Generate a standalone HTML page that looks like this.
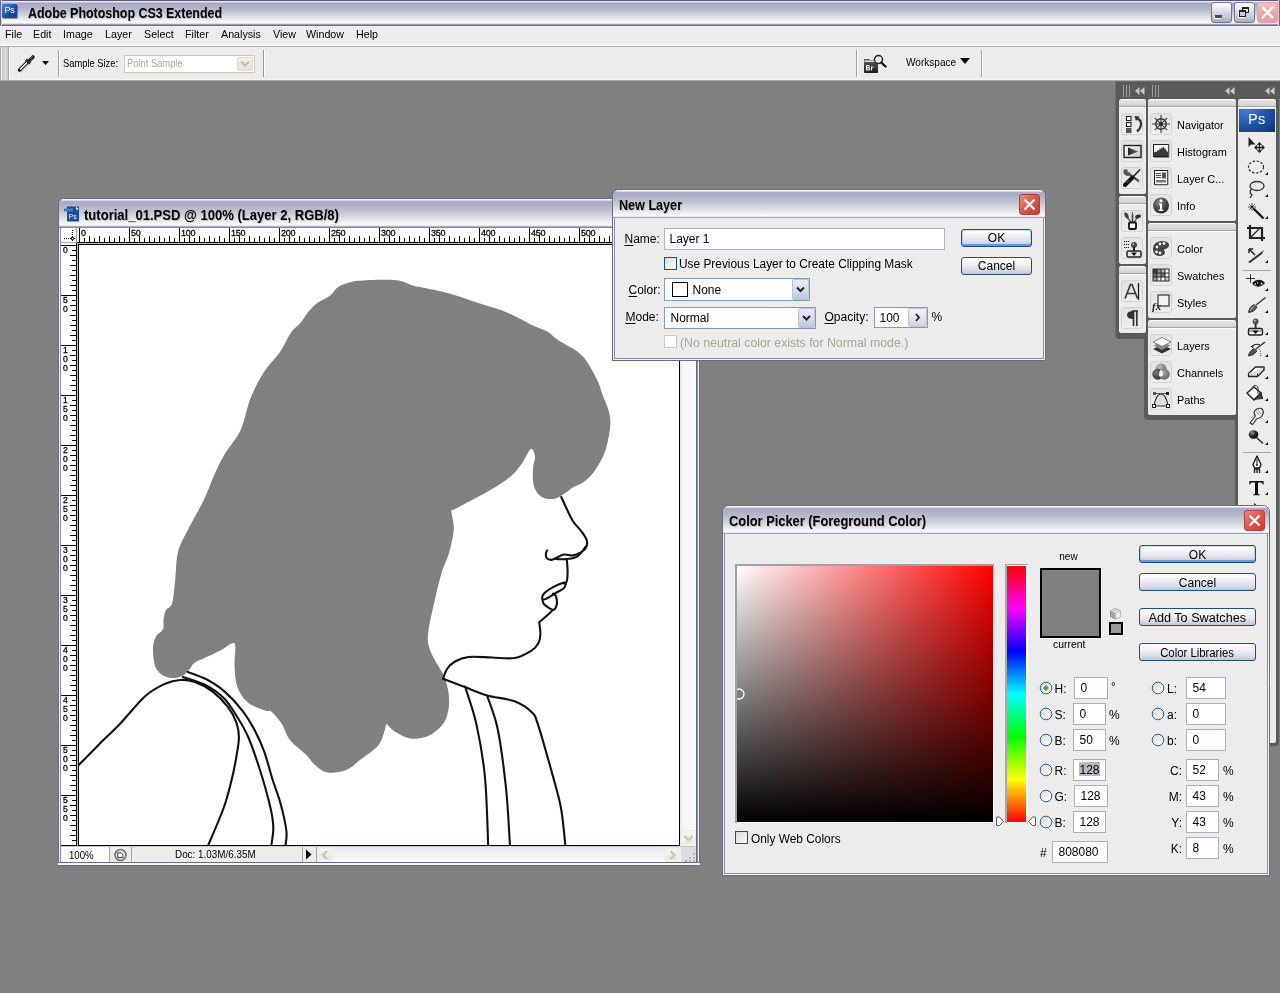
<!DOCTYPE html><html><head><meta charset="utf-8"><style>
html,body{margin:0;padding:0;}
body{width:1280px;height:993px;overflow:hidden;background:#808080;position:relative;font-family:"Liberation Sans", sans-serif;}
div{box-sizing:border-box;}
</style></head><body>
<div id="root" style="position:absolute;left:0;top:0;width:1280px;height:993px;will-change:transform">
<div style="position:absolute;left:0px;top:0px;width:1280px;height:26px;background:linear-gradient(to bottom,#5b5b7b 0px,#5b5b7b 1px,#f2f2f8 1px,#e0e0ec 2px,#a9a9c6 3px,#aaaac6 5px,#b9bccd 10px,#d2d4de 15px,#eeeef2 20px,#fbfbfb 22px,#f2f2f4 23px,#d0d0dc 24px,#6a6a88 25px,#6a6a88 26px)"></div>
<div style="position:absolute;left:0px;top:0px;width:2px;height:26px;background:linear-gradient(to right,#6a6a88 1px,#d0d0e0 1px)"></div>
<div style="position:absolute;left:1278px;top:0px;width:2px;height:26px;background:linear-gradient(to right,#d0d0e0 1px,#6a6a88 1px)"></div>
<div style="position:absolute;left:2px;top:4px;width:15px;height:14px;background:linear-gradient(135deg,#4a86d8,#1c4a9c 60%,#173f86);border-radius:1px;box-shadow:1px 1px 0 rgba(0,0,30,0.35)"></div>
<div style="position:absolute;left:4.5px;top:5.74px;font-size:9px;line-height:9px;color:#fff;font-weight:400;white-space:nowrap;letter-spacing:-0.2px">Ps</div>
<div style="position:absolute;left:28px;top:5.60px;font-size:14.5px;line-height:14.5px;color:#000;font-weight:700;white-space:nowrap;transform:scaleX(0.857);transform-origin:0 0;text-shadow:1px 1px 0 rgba(120,120,150,0.35)">Adobe Photoshop CS3 Extended</div>
<div style="position:absolute;left:1211px;top:2px;width:21px;height:21px;border:1px solid #6e7898;border-radius:3px;background:linear-gradient(to bottom,#ffffff,#e8e8f0 30%,#c0c0d4 80%,#a8a8c0)"></div>
<div style="position:absolute;left:1234px;top:2px;width:21px;height:21px;border:1px solid #6e7898;border-radius:3px;background:linear-gradient(to bottom,#ffffff,#e8e8f0 30%,#c0c0d4 80%,#a8a8c0)"></div>
<div style="position:absolute;left:1257px;top:2px;width:21px;height:21px;border:1px solid #e8a0a0;border-radius:3px;background:linear-gradient(to bottom,#f4c4c0,#e8a8a4 50%,#e4a0a0)"></div>
<div style="position:absolute;left:1215px;top:15px;width:7px;height:3px;background:#4a4a6a;box-shadow:-1px 1px 0 #fff"></div>
<div style="position:absolute;left:1242px;top:7px;width:7px;height:6px;border:1px solid #222;border-top-width:2px;"></div>
<div style="position:absolute;left:1239px;top:10px;width:7px;height:7px;border:1px solid #222;border-top-width:2px;background:#c8c8dc;box-shadow:-1px 1px 0 #fff"></div>
<svg style="position:absolute;left:1257px;top:2px" width="21" height="21"><path d="M5 5 L16 16 M16 5 L5 16" stroke="#fff" stroke-width="2.2"/></svg>
<div style="position:absolute;left:0px;top:26px;width:1280px;height:20px;background:linear-gradient(to bottom,#f4f4f0 0,#f4f4f0 1px,#ececec 1px,#ececec 18px,#fbfbfb 19px)"></div>
<div style="position:absolute;left:5px;top:29.15px;font-size:11.5px;line-height:11.5px;color:#000;font-weight:400;white-space:nowrap;transform:scaleX(0.93);transform-origin:0 0;">File</div>
<div style="position:absolute;left:33px;top:29.15px;font-size:11.5px;line-height:11.5px;color:#000;font-weight:400;white-space:nowrap;transform:scaleX(0.93);transform-origin:0 0;">Edit</div>
<div style="position:absolute;left:63px;top:29.15px;font-size:11.5px;line-height:11.5px;color:#000;font-weight:400;white-space:nowrap;transform:scaleX(0.93);transform-origin:0 0;">Image</div>
<div style="position:absolute;left:105px;top:29.15px;font-size:11.5px;line-height:11.5px;color:#000;font-weight:400;white-space:nowrap;transform:scaleX(0.93);transform-origin:0 0;">Layer</div>
<div style="position:absolute;left:144px;top:29.15px;font-size:11.5px;line-height:11.5px;color:#000;font-weight:400;white-space:nowrap;transform:scaleX(0.93);transform-origin:0 0;">Select</div>
<div style="position:absolute;left:185px;top:29.15px;font-size:11.5px;line-height:11.5px;color:#000;font-weight:400;white-space:nowrap;transform:scaleX(0.93);transform-origin:0 0;">Filter</div>
<div style="position:absolute;left:221px;top:29.15px;font-size:11.5px;line-height:11.5px;color:#000;font-weight:400;white-space:nowrap;transform:scaleX(0.93);transform-origin:0 0;">Analysis</div>
<div style="position:absolute;left:273px;top:29.15px;font-size:11.5px;line-height:11.5px;color:#000;font-weight:400;white-space:nowrap;transform:scaleX(0.93);transform-origin:0 0;">View</div>
<div style="position:absolute;left:306px;top:29.15px;font-size:11.5px;line-height:11.5px;color:#000;font-weight:400;white-space:nowrap;transform:scaleX(0.93);transform-origin:0 0;">Window</div>
<div style="position:absolute;left:356px;top:29.15px;font-size:11.5px;line-height:11.5px;color:#000;font-weight:400;white-space:nowrap;transform:scaleX(0.93);transform-origin:0 0;">Help</div>
<div style="position:absolute;left:0px;top:46px;width:1280px;height:35px;background:linear-gradient(to bottom,#b0b0b0 0,#b0b0b0 1px,#ececec 1px,#ececec 33px,#f6f6f6 33px,#f6f6f6 34px,#a8a8a8 34px)"></div>
<div style="position:absolute;left:0px;top:47px;width:10px;height:33px;background:linear-gradient(to right,#a8a8a8 0,#a8a8a8 1px,#f0f0f0 1px,#f0f0f0 2px,#c6c6c6 2px,#dadada 5px,#c8c8c8 8px,#a6a6a6 8px,#a6a6a6 9px,#fafafa 9px)"></div>
<svg style="position:absolute;left:17px;top:53px" width="20" height="20" viewBox="0 0 20 20">
<path d="M2.8 17.2 L11 9" stroke="#aaa" stroke-width="3.4" stroke-linecap="round" transform="translate(0.8,0.8)" opacity="0.35"/>
<path d="M2.5 17 L10.5 9" stroke="#111" stroke-width="3.4" stroke-linecap="round"/>
<path d="M3 16.5 L10 9.5" stroke="#fff" stroke-width="1.6"/>
<path d="M9 6.5 L13 10.5" stroke="#333" stroke-width="3"/>
<path d="M12 8 L16 4" stroke="#2a2a2a" stroke-width="3.6" stroke-linecap="round"/>
<path d="M13.5 5.5 L15.5 3.5" stroke="#777" stroke-width="1"/>
</svg>
<svg style="position:absolute;left:42px;top:61px" width="8" height="5"><path d="M0 0 H7 L3.5 4 Z" fill="#000"/></svg>
<div style="position:absolute;left:58px;top:50px;width:2px;height:27px;background:linear-gradient(to right,#a0a0a8 1px,#fff 1px)"></div>
<div style="position:absolute;left:63px;top:57.71px;font-size:11px;line-height:11px;color:#000;font-weight:400;white-space:nowrap;transform:scaleX(0.85);transform-origin:0 0;">Sample Size:</div>
<div style="position:absolute;left:124px;top:55px;width:131px;height:18px;border:1px solid #c9c9b9;background:#fff"></div>
<div style="position:absolute;left:126px;top:57px;width:111px;height:14px;background:#fff"></div>
<div style="position:absolute;left:127px;top:58.21px;font-size:11px;line-height:11px;color:#a8a898;font-weight:400;white-space:nowrap;transform:scaleX(0.85);transform-origin:0 0;">Point Sample</div>
<div style="position:absolute;left:237px;top:57px;width:16px;height:14px;background:linear-gradient(#f2f2ea,#e4e4d8);border:1px solid #d8d8cc;border-radius:2px"></div>
<svg style="position:absolute;left:240px;top:60px" width="10" height="8"><path d="M1 1.5 L5 5.5 L9 1.5" stroke="#c0c0b0" stroke-width="2" fill="none"/></svg>
<div style="position:absolute;left:263px;top:50px;width:2px;height:27px;background:linear-gradient(to right,#9898a4 1px,#fff 1px)"></div>
<div style="position:absolute;left:856px;top:50px;width:2px;height:27px;background:linear-gradient(to right,#a0a0a8 1px,#fff 1px)"></div>
<svg style="position:absolute;left:863px;top:54px;filter:grayscale(1)" width="25" height="20" viewBox="0 0 25 20">
<defs><linearGradient id="brg" x1="0" y1="0" x2="0" y2="1"><stop offset="0" stop-color="#666"/><stop offset="1" stop-color="#1a1a1a"/></linearGradient></defs>
<path d="M1 5 H6 L7 6 H15 V18 Q15 19 14 19 H2 Q1 19 1 18 Z" fill="url(#brg)"/>
<path d="M1.5 6.5 H14.5 V8 H1.5 Z" fill="#ddd"/>
<path d="M3 16.5 V11 H5.2 Q6.8 11 6.8 12.4 Q6.8 13.4 5.8 13.6 Q7.1 13.8 7.1 15 Q7.1 16.5 5.4 16.5 Z M4.2 12 V13.2 H5.1 Q5.7 13.2 5.7 12.6 Q5.7 12 5.1 12 Z M4.2 14.2 V15.5 H5.3 Q6 15.5 6 14.85 Q6 14.2 5.3 14.2 Z M8 16.5 V12.6 H9 V13.4 Q9.4 12.5 10.4 12.5 V13.6 Q9 13.6 9 14.8 V16.5 Z" fill="#fff"/>
<circle cx="15.5" cy="5.5" r="4" fill="#f0f0f0" stroke="#222" stroke-width="1.4"/>
<path d="M18.3 8.5 L22.5 12.5" stroke="#111" stroke-width="2.4" stroke-linecap="round"/>
</svg>
<div style="position:absolute;left:906px;top:57.21px;font-size:11px;line-height:11px;color:#000;font-weight:400;white-space:nowrap;transform:scaleX(0.915);transform-origin:0 0;">Workspace</div>
<svg style="position:absolute;left:960px;top:58px" width="11" height="7"><path d="M0 0 H10 L5 6 Z" fill="#000"/></svg>
<div style="position:absolute;left:981px;top:50px;width:2px;height:27px;background:linear-gradient(to right,#a0a0a8 1px,#fff 1px)"></div>
<div style="position:absolute;left:58px;top:198px;width:642px;height:668px;background:#8c8ca8;border:1px solid #6a6a8a;border-radius:6px 6px 0 0"></div>
<div style="position:absolute;left:59px;top:199px;width:640px;height:666px;border:1px solid #f4f4f8;border-radius:5px 5px 0 0;background:transparent"></div>
<div style="position:absolute;left:59px;top:199px;width:640px;height:29px;border-radius:5px 5px 0 0;background:linear-gradient(to bottom,#f8f8fc 0,#f8f8fc 1px,#b0b0cc 2px,#a9a9c6 4px,#bcbfce 11px,#d8dae2 18px,#f4f4f6 24px,#fbfbfb 26px,#d8d8e0 27px,#8a8aa8 28px,#7a7a98 29px)"></div>
<svg style="position:absolute;left:63px;top:205px" width="18" height="18" viewBox="0 0 18 18">
<rect x="4" y="1.5" width="12" height="15" fill="#1e4c9c"/>
<rect x="1" y="3.5" width="9" height="3" fill="#3a78d4"/>
<path d="M13 1.5 L16 4.5 L13 4.5 Z" fill="#fff"/>
<text x="5.5" y="14" font-size="7" fill="#fff" font-family="Liberation Sans">Ps</text>
</svg>
<div style="position:absolute;left:84px;top:207.95px;font-size:14px;line-height:14px;color:#000;font-weight:700;white-space:nowrap;transform:scaleX(0.932);transform-origin:0 0;text-shadow:1px 1px 0 rgba(120,120,150,0.3)">tutorial_01.PSD @ 100% (Layer 2, RGB/8)</div>
<div style="position:absolute;left:61px;top:228px;width:635px;height:15px;background:#fff"></div>
<div style="position:absolute;left:61px;top:243px;width:16px;height:603px;background:#fff"></div>
<div style="position:absolute;left:61px;top:228px;width:16px;height:15px;background:#fff;border-right:1px solid #a8a8a8;border-bottom:1px solid #a8a8a8"></div>
<svg style="position:absolute;left:61px;top:228px" width="16" height="15"><path d="M3 10.5 H14" stroke="#000" stroke-width="1" stroke-dasharray="1 1"/><path d="M11.5 2 V14" stroke="#000" stroke-width="1" stroke-dasharray="1 1"/><rect x="10.5" y="9.5" width="2" height="2" fill="#fff" stroke="#000" stroke-width="0.8"/></svg>
<svg style="position:absolute;left:0;top:0" width="1280" height="993"><path d="M79.5 228 V242 M84.5 238 V242 M89.5 236 V242 M94.5 238 V242 M99.5 236 V242 M104.5 238 V242 M109.5 236 V242 M114.5 238 V242 M119.5 236 V242 M124.5 238 V242 M129.5 228 V242 M134.5 238 V242 M139.5 236 V242 M144.5 238 V242 M149.5 236 V242 M154.5 238 V242 M159.5 236 V242 M164.5 238 V242 M169.5 236 V242 M174.5 238 V242 M179.5 228 V242 M184.5 238 V242 M189.5 236 V242 M194.5 238 V242 M199.5 236 V242 M204.5 238 V242 M209.5 236 V242 M214.5 238 V242 M219.5 236 V242 M224.5 238 V242 M229.5 228 V242 M234.5 238 V242 M239.5 236 V242 M244.5 238 V242 M249.5 236 V242 M254.5 238 V242 M259.5 236 V242 M264.5 238 V242 M269.5 236 V242 M274.5 238 V242 M279.5 228 V242 M284.5 238 V242 M289.5 236 V242 M294.5 238 V242 M299.5 236 V242 M304.5 238 V242 M309.5 236 V242 M314.5 238 V242 M319.5 236 V242 M324.5 238 V242 M329.5 228 V242 M334.5 238 V242 M339.5 236 V242 M344.5 238 V242 M349.5 236 V242 M354.5 238 V242 M359.5 236 V242 M364.5 238 V242 M369.5 236 V242 M374.5 238 V242 M379.5 228 V242 M384.5 238 V242 M389.5 236 V242 M394.5 238 V242 M399.5 236 V242 M404.5 238 V242 M409.5 236 V242 M414.5 238 V242 M419.5 236 V242 M424.5 238 V242 M429.5 228 V242 M434.5 238 V242 M439.5 236 V242 M444.5 238 V242 M449.5 236 V242 M454.5 238 V242 M459.5 236 V242 M464.5 238 V242 M469.5 236 V242 M474.5 238 V242 M479.5 228 V242 M484.5 238 V242 M489.5 236 V242 M494.5 238 V242 M499.5 236 V242 M504.5 238 V242 M509.5 236 V242 M514.5 238 V242 M519.5 236 V242 M524.5 238 V242 M529.5 228 V242 M534.5 238 V242 M539.5 236 V242 M544.5 238 V242 M549.5 236 V242 M554.5 238 V242 M559.5 236 V242 M564.5 238 V242 M569.5 236 V242 M574.5 238 V242 M579.5 228 V242 M584.5 238 V242 M589.5 236 V242 M594.5 238 V242 M599.5 236 V242 M604.5 238 V242 M609.5 236 V242 M614.5 238 V242 M619.5 236 V242 M624.5 238 V242 M629.5 228 V242 M634.5 238 V242 M639.5 236 V242 M644.5 238 V242 M649.5 236 V242 M654.5 238 V242 M659.5 236 V242 M664.5 238 V242 M669.5 236 V242 M674.5 238 V242 M679.5 228 V242 M684.5 238 V242 M689.5 236 V242 M694.5 238 V242 M699.5 236 V242 M77 242.5 H699" stroke="#000" stroke-width="1" fill="none"/></svg>
<div style="position:absolute;left:81px;top:228.38px;font-size:9.5px;line-height:9.5px;color:#000;font-weight:400;white-space:nowrap;transform:scaleX(0.95);transform-origin:0 0;letter-spacing:-0.3px;-webkit-text-stroke:0.3px #000">0</div>
<div style="position:absolute;left:131px;top:228.38px;font-size:9.5px;line-height:9.5px;color:#000;font-weight:400;white-space:nowrap;transform:scaleX(0.95);transform-origin:0 0;letter-spacing:-0.3px;-webkit-text-stroke:0.3px #000">50</div>
<div style="position:absolute;left:181px;top:228.38px;font-size:9.5px;line-height:9.5px;color:#000;font-weight:400;white-space:nowrap;transform:scaleX(0.95);transform-origin:0 0;letter-spacing:-0.3px;-webkit-text-stroke:0.3px #000">100</div>
<div style="position:absolute;left:231px;top:228.38px;font-size:9.5px;line-height:9.5px;color:#000;font-weight:400;white-space:nowrap;transform:scaleX(0.95);transform-origin:0 0;letter-spacing:-0.3px;-webkit-text-stroke:0.3px #000">150</div>
<div style="position:absolute;left:281px;top:228.38px;font-size:9.5px;line-height:9.5px;color:#000;font-weight:400;white-space:nowrap;transform:scaleX(0.95);transform-origin:0 0;letter-spacing:-0.3px;-webkit-text-stroke:0.3px #000">200</div>
<div style="position:absolute;left:331px;top:228.38px;font-size:9.5px;line-height:9.5px;color:#000;font-weight:400;white-space:nowrap;transform:scaleX(0.95);transform-origin:0 0;letter-spacing:-0.3px;-webkit-text-stroke:0.3px #000">250</div>
<div style="position:absolute;left:381px;top:228.38px;font-size:9.5px;line-height:9.5px;color:#000;font-weight:400;white-space:nowrap;transform:scaleX(0.95);transform-origin:0 0;letter-spacing:-0.3px;-webkit-text-stroke:0.3px #000">300</div>
<div style="position:absolute;left:431px;top:228.38px;font-size:9.5px;line-height:9.5px;color:#000;font-weight:400;white-space:nowrap;transform:scaleX(0.95);transform-origin:0 0;letter-spacing:-0.3px;-webkit-text-stroke:0.3px #000">350</div>
<div style="position:absolute;left:481px;top:228.38px;font-size:9.5px;line-height:9.5px;color:#000;font-weight:400;white-space:nowrap;transform:scaleX(0.95);transform-origin:0 0;letter-spacing:-0.3px;-webkit-text-stroke:0.3px #000">400</div>
<div style="position:absolute;left:531px;top:228.38px;font-size:9.5px;line-height:9.5px;color:#000;font-weight:400;white-space:nowrap;transform:scaleX(0.95);transform-origin:0 0;letter-spacing:-0.3px;-webkit-text-stroke:0.3px #000">450</div>
<div style="position:absolute;left:581px;top:228.38px;font-size:9.5px;line-height:9.5px;color:#000;font-weight:400;white-space:nowrap;transform:scaleX(0.95);transform-origin:0 0;letter-spacing:-0.3px;-webkit-text-stroke:0.3px #000">500</div>
<svg style="position:absolute;left:0;top:0" width="1280" height="993"><path d="M61 245.5 H77 M72 250.5 H77 M70 255.5 H77 M72 260.5 H77 M70 265.5 H77 M72 270.5 H77 M70 275.5 H77 M72 280.5 H77 M70 285.5 H77 M72 290.5 H77 M61 295.5 H77 M72 300.5 H77 M70 305.5 H77 M72 310.5 H77 M70 315.5 H77 M72 320.5 H77 M70 325.5 H77 M72 330.5 H77 M70 335.5 H77 M72 340.5 H77 M61 345.5 H77 M72 350.5 H77 M70 355.5 H77 M72 360.5 H77 M70 365.5 H77 M72 370.5 H77 M70 375.5 H77 M72 380.5 H77 M70 385.5 H77 M72 390.5 H77 M61 395.5 H77 M72 400.5 H77 M70 405.5 H77 M72 410.5 H77 M70 415.5 H77 M72 420.5 H77 M70 425.5 H77 M72 430.5 H77 M70 435.5 H77 M72 440.5 H77 M61 445.5 H77 M72 450.5 H77 M70 455.5 H77 M72 460.5 H77 M70 465.5 H77 M72 470.5 H77 M70 475.5 H77 M72 480.5 H77 M70 485.5 H77 M72 490.5 H77 M61 495.5 H77 M72 500.5 H77 M70 505.5 H77 M72 510.5 H77 M70 515.5 H77 M72 520.5 H77 M70 525.5 H77 M72 530.5 H77 M70 535.5 H77 M72 540.5 H77 M61 545.5 H77 M72 550.5 H77 M70 555.5 H77 M72 560.5 H77 M70 565.5 H77 M72 570.5 H77 M70 575.5 H77 M72 580.5 H77 M70 585.5 H77 M72 590.5 H77 M61 595.5 H77 M72 600.5 H77 M70 605.5 H77 M72 610.5 H77 M70 615.5 H77 M72 620.5 H77 M70 625.5 H77 M72 630.5 H77 M70 635.5 H77 M72 640.5 H77 M61 645.5 H77 M72 650.5 H77 M70 655.5 H77 M72 660.5 H77 M70 665.5 H77 M72 670.5 H77 M70 675.5 H77 M72 680.5 H77 M70 685.5 H77 M72 690.5 H77 M61 695.5 H77 M72 700.5 H77 M70 705.5 H77 M72 710.5 H77 M70 715.5 H77 M72 720.5 H77 M70 725.5 H77 M72 730.5 H77 M70 735.5 H77 M72 740.5 H77 M61 745.5 H77 M72 750.5 H77 M70 755.5 H77 M72 760.5 H77 M70 765.5 H77 M72 770.5 H77 M70 775.5 H77 M72 780.5 H77 M70 785.5 H77 M72 790.5 H77 M61 795.5 H77 M72 800.5 H77 M70 805.5 H77 M72 810.5 H77 M70 815.5 H77 M72 820.5 H77 M70 825.5 H77 M72 830.5 H77 M70 835.5 H77 M72 840.5 H77 M61 845.5 H77 M76.5 243 V846" stroke="#000" stroke-width="1" fill="none"/></svg>
<div style="position:absolute;left:63px;top:245.94px;font-size:9px;line-height:9px;color:#000;font-weight:400;white-space:nowrap;transform:scaleX(0.95);transform-origin:0 0;-webkit-text-stroke:0.3px #000">0</div>
<div style="position:absolute;left:63px;top:295.94px;font-size:9px;line-height:9px;color:#000;font-weight:400;white-space:nowrap;transform:scaleX(0.95);transform-origin:0 0;-webkit-text-stroke:0.3px #000">5</div>
<div style="position:absolute;left:63px;top:304.94px;font-size:9px;line-height:9px;color:#000;font-weight:400;white-space:nowrap;transform:scaleX(0.95);transform-origin:0 0;-webkit-text-stroke:0.3px #000">0</div>
<div style="position:absolute;left:63px;top:345.94px;font-size:9px;line-height:9px;color:#000;font-weight:400;white-space:nowrap;transform:scaleX(0.95);transform-origin:0 0;-webkit-text-stroke:0.3px #000">1</div>
<div style="position:absolute;left:63px;top:354.94px;font-size:9px;line-height:9px;color:#000;font-weight:400;white-space:nowrap;transform:scaleX(0.95);transform-origin:0 0;-webkit-text-stroke:0.3px #000">0</div>
<div style="position:absolute;left:63px;top:363.94px;font-size:9px;line-height:9px;color:#000;font-weight:400;white-space:nowrap;transform:scaleX(0.95);transform-origin:0 0;-webkit-text-stroke:0.3px #000">0</div>
<div style="position:absolute;left:63px;top:395.94px;font-size:9px;line-height:9px;color:#000;font-weight:400;white-space:nowrap;transform:scaleX(0.95);transform-origin:0 0;-webkit-text-stroke:0.3px #000">1</div>
<div style="position:absolute;left:63px;top:404.94px;font-size:9px;line-height:9px;color:#000;font-weight:400;white-space:nowrap;transform:scaleX(0.95);transform-origin:0 0;-webkit-text-stroke:0.3px #000">5</div>
<div style="position:absolute;left:63px;top:413.94px;font-size:9px;line-height:9px;color:#000;font-weight:400;white-space:nowrap;transform:scaleX(0.95);transform-origin:0 0;-webkit-text-stroke:0.3px #000">0</div>
<div style="position:absolute;left:63px;top:445.94px;font-size:9px;line-height:9px;color:#000;font-weight:400;white-space:nowrap;transform:scaleX(0.95);transform-origin:0 0;-webkit-text-stroke:0.3px #000">2</div>
<div style="position:absolute;left:63px;top:454.94px;font-size:9px;line-height:9px;color:#000;font-weight:400;white-space:nowrap;transform:scaleX(0.95);transform-origin:0 0;-webkit-text-stroke:0.3px #000">0</div>
<div style="position:absolute;left:63px;top:463.94px;font-size:9px;line-height:9px;color:#000;font-weight:400;white-space:nowrap;transform:scaleX(0.95);transform-origin:0 0;-webkit-text-stroke:0.3px #000">0</div>
<div style="position:absolute;left:63px;top:495.94px;font-size:9px;line-height:9px;color:#000;font-weight:400;white-space:nowrap;transform:scaleX(0.95);transform-origin:0 0;-webkit-text-stroke:0.3px #000">2</div>
<div style="position:absolute;left:63px;top:504.94px;font-size:9px;line-height:9px;color:#000;font-weight:400;white-space:nowrap;transform:scaleX(0.95);transform-origin:0 0;-webkit-text-stroke:0.3px #000">5</div>
<div style="position:absolute;left:63px;top:513.94px;font-size:9px;line-height:9px;color:#000;font-weight:400;white-space:nowrap;transform:scaleX(0.95);transform-origin:0 0;-webkit-text-stroke:0.3px #000">0</div>
<div style="position:absolute;left:63px;top:545.94px;font-size:9px;line-height:9px;color:#000;font-weight:400;white-space:nowrap;transform:scaleX(0.95);transform-origin:0 0;-webkit-text-stroke:0.3px #000">3</div>
<div style="position:absolute;left:63px;top:554.94px;font-size:9px;line-height:9px;color:#000;font-weight:400;white-space:nowrap;transform:scaleX(0.95);transform-origin:0 0;-webkit-text-stroke:0.3px #000">0</div>
<div style="position:absolute;left:63px;top:563.94px;font-size:9px;line-height:9px;color:#000;font-weight:400;white-space:nowrap;transform:scaleX(0.95);transform-origin:0 0;-webkit-text-stroke:0.3px #000">0</div>
<div style="position:absolute;left:63px;top:595.94px;font-size:9px;line-height:9px;color:#000;font-weight:400;white-space:nowrap;transform:scaleX(0.95);transform-origin:0 0;-webkit-text-stroke:0.3px #000">3</div>
<div style="position:absolute;left:63px;top:604.94px;font-size:9px;line-height:9px;color:#000;font-weight:400;white-space:nowrap;transform:scaleX(0.95);transform-origin:0 0;-webkit-text-stroke:0.3px #000">5</div>
<div style="position:absolute;left:63px;top:613.94px;font-size:9px;line-height:9px;color:#000;font-weight:400;white-space:nowrap;transform:scaleX(0.95);transform-origin:0 0;-webkit-text-stroke:0.3px #000">0</div>
<div style="position:absolute;left:63px;top:645.94px;font-size:9px;line-height:9px;color:#000;font-weight:400;white-space:nowrap;transform:scaleX(0.95);transform-origin:0 0;-webkit-text-stroke:0.3px #000">4</div>
<div style="position:absolute;left:63px;top:654.94px;font-size:9px;line-height:9px;color:#000;font-weight:400;white-space:nowrap;transform:scaleX(0.95);transform-origin:0 0;-webkit-text-stroke:0.3px #000">0</div>
<div style="position:absolute;left:63px;top:663.94px;font-size:9px;line-height:9px;color:#000;font-weight:400;white-space:nowrap;transform:scaleX(0.95);transform-origin:0 0;-webkit-text-stroke:0.3px #000">0</div>
<div style="position:absolute;left:63px;top:695.94px;font-size:9px;line-height:9px;color:#000;font-weight:400;white-space:nowrap;transform:scaleX(0.95);transform-origin:0 0;-webkit-text-stroke:0.3px #000">4</div>
<div style="position:absolute;left:63px;top:704.94px;font-size:9px;line-height:9px;color:#000;font-weight:400;white-space:nowrap;transform:scaleX(0.95);transform-origin:0 0;-webkit-text-stroke:0.3px #000">5</div>
<div style="position:absolute;left:63px;top:713.94px;font-size:9px;line-height:9px;color:#000;font-weight:400;white-space:nowrap;transform:scaleX(0.95);transform-origin:0 0;-webkit-text-stroke:0.3px #000">0</div>
<div style="position:absolute;left:63px;top:745.94px;font-size:9px;line-height:9px;color:#000;font-weight:400;white-space:nowrap;transform:scaleX(0.95);transform-origin:0 0;-webkit-text-stroke:0.3px #000">5</div>
<div style="position:absolute;left:63px;top:754.94px;font-size:9px;line-height:9px;color:#000;font-weight:400;white-space:nowrap;transform:scaleX(0.95);transform-origin:0 0;-webkit-text-stroke:0.3px #000">0</div>
<div style="position:absolute;left:63px;top:763.94px;font-size:9px;line-height:9px;color:#000;font-weight:400;white-space:nowrap;transform:scaleX(0.95);transform-origin:0 0;-webkit-text-stroke:0.3px #000">0</div>
<div style="position:absolute;left:63px;top:795.94px;font-size:9px;line-height:9px;color:#000;font-weight:400;white-space:nowrap;transform:scaleX(0.95);transform-origin:0 0;-webkit-text-stroke:0.3px #000">5</div>
<div style="position:absolute;left:63px;top:804.94px;font-size:9px;line-height:9px;color:#000;font-weight:400;white-space:nowrap;transform:scaleX(0.95);transform-origin:0 0;-webkit-text-stroke:0.3px #000">5</div>
<div style="position:absolute;left:63px;top:813.94px;font-size:9px;line-height:9px;color:#000;font-weight:400;white-space:nowrap;transform:scaleX(0.95);transform-origin:0 0;-webkit-text-stroke:0.3px #000">0</div>
<div style="position:absolute;left:77px;top:243px;width:603px;height:603px;background:#c0c0c0"></div>
<div style="position:absolute;left:78px;top:244px;width:602px;height:602px;background:#000"></div>
<div style="position:absolute;left:79px;top:245px;width:600px;height:600px;background:#fff"></div>
<div style="position:absolute;left:680px;top:228px;width:16px;height:618px;background:linear-gradient(to right,#e4e4ea,#f6f6fa 3px,#fafafe)"></div>
<div style="position:absolute;left:696px;top:228px;width:1px;height:637px;background:#6a6a8a"></div>
<div style="position:absolute;left:682px;top:831px;width:13px;height:14px;background:linear-gradient(#f4f4ec,#e8e8dc);border:1px solid #f8f8f0;border-radius:2px;box-shadow:0 0 0 1px #ecece0"></div>
<svg style="position:absolute;left:682px;top:831px" width="13" height="14"><path d="M2.5 5 L6.5 9 L10.5 5" stroke="#c4c4b8" stroke-width="2" fill="none"/></svg>
<div style="position:absolute;left:61px;top:846px;width:635px;height:1px;background:#c8c8d0"></div>
<div style="position:absolute;left:61px;top:847px;width:635px;height:15px;background:#ececec"></div>
<div style="position:absolute;left:62px;top:847px;width:47px;height:15px;background:#fff"></div>
<div style="position:absolute;left:109px;top:847px;width:1px;height:15px;background:#a8a8a8"></div>
<div style="position:absolute;left:131px;top:847px;width:1px;height:15px;background:#a8a8a8"></div>
<div style="position:absolute;left:302px;top:847px;width:1px;height:15px;background:#a8a8a8"></div>
<div style="position:absolute;left:316px;top:847px;width:1px;height:15px;background:#a8a8a8"></div>
<div style="position:absolute;left:68.5px;top:849.77px;font-size:10.5px;line-height:10.5px;color:#000;font-weight:400;white-space:nowrap;transform:scaleX(0.92);transform-origin:0 0;">100%</div>
<svg style="position:absolute;left:113px;top:848px" width="15" height="14"><circle cx="7.5" cy="7" r="5.5" fill="#e0e0e0" stroke="#707070" stroke-width="1.6"/><path d="M4.8 9.5 V4.8 H8 L10 7.2 V9.5 Z" fill="#fff" stroke="#333" stroke-width="0.9"/></svg>
<div style="position:absolute;left:175px;top:849.27px;font-size:10.5px;line-height:10.5px;color:#000;font-weight:400;white-space:nowrap;transform:scaleX(0.94);transform-origin:0 0;">Doc: 1.03M/6.35M</div>
<svg style="position:absolute;left:305px;top:849px" width="8" height="11"><path d="M1 0.5 L6.5 5.5 L1 10.5 Z" fill="#000"/></svg>
<div style="position:absolute;left:317px;top:847px;width:364px;height:15px;background:linear-gradient(to bottom,#e6e8f0,#f2f4f8 60%,#fcfcfe)"></div>
<div style="position:absolute;left:318px;top:849px;width:15px;height:12px;background:linear-gradient(#f4f4ec,#e6e6da);border:1px solid #f8f8f0;border-radius:2px;box-shadow:0 0 0 1px #ecece0"></div>
<svg style="position:absolute;left:318px;top:849px" width="15" height="12"><path d="M9 2 L5 6 L9 10" stroke="#c4c4b8" stroke-width="2" fill="none"/></svg>
<div style="position:absolute;left:665px;top:849px;width:14px;height:12px;background:linear-gradient(#f4f4ec,#e6e6da);border:1px solid #f8f8f0;border-radius:2px;box-shadow:0 0 0 1px #ecece0"></div>
<svg style="position:absolute;left:665px;top:849px" width="14" height="12"><path d="M5.5 2 L9.5 6 L5.5 10" stroke="#c4c4b8" stroke-width="2" fill="none"/></svg>
<div style="position:absolute;left:681px;top:847px;width:15px;height:15px;background:#dcdce4"></div>
<svg style="position:absolute;left:681px;top:847px" width="15" height="15"><g fill="#bcb8a0"><rect x="12" y="6" width="2" height="2"/><rect x="8" y="10" width="2" height="2"/><rect x="12" y="10" width="2" height="2"/><rect x="4" y="13" width="2" height="2"/><rect x="8" y="13" width="2" height="2"/><rect x="12" y="13" width="2" height="2"/></g></svg>
<div style="position:absolute;left:58px;top:862px;width:642px;height:1px;background:#6a6a8a"></div>
<div style="position:absolute;left:58px;top:863px;width:642px;height:2px;background:#f4f4f8"></div>
<div style="position:absolute;left:58px;top:865px;width:642px;height:1px;background:#6a6a8a"></div>
<svg style="position:absolute;left:0;top:0" width="1280" height="993">
<defs><clipPath id="cv"><rect x="79" y="245" width="600" height="600"/></clipPath><filter id="bl" x="-5%" y="-5%" width="110%" height="110%"><feGaussianBlur stdDeviation="0.75"/></filter></defs>
<g clip-path="url(#cv)">
<path d="M380.0 279.8 C385.3 279.9 393.3 279.6 398.8 280.6 C404.3 281.6 407.9 284.2 412.8 285.6 C417.7 287.0 421.9 287.4 428.4 288.8 C434.9 290.2 443.3 291.7 451.9 294.2 C460.5 296.7 470.7 300.5 480.0 303.6 C489.3 306.7 498.7 309.1 507.5 312.7 C516.3 316.3 526.2 322.2 532.9 325.4 C539.6 328.6 543.5 329.2 547.7 331.7 C551.9 334.2 552.7 336.3 558.3 340.2 C563.9 344.1 575.1 348.6 581.5 355.0 C587.9 361.4 592.9 371.6 596.4 378.3 C599.9 385.0 600.6 389.6 602.7 395.2 C604.8 400.8 607.8 406.8 609.0 412.1 C610.2 417.4 610.8 420.2 610.1 426.9 C609.4 433.6 607.4 444.9 604.8 452.3 C602.1 459.7 597.7 466.5 594.2 471.4 C590.7 476.3 587.2 479.3 583.7 481.9 C580.2 484.5 576.3 485.2 573.1 487.2 C569.9 489.1 567.8 491.7 564.6 493.6 C561.4 495.6 557.9 498.4 554.0 498.9 C550.1 499.4 544.6 498.8 541.3 496.7 C538.0 494.6 535.4 490.8 534.0 486.2 C532.6 481.6 532.7 474.1 532.9 469.2 C533.1 464.2 535.4 459.9 535.0 456.5 C534.6 453.1 532.9 448.0 530.8 449.1 C528.7 450.2 525.5 458.5 522.3 462.9 C519.1 467.3 515.9 471.7 511.7 475.6 C507.5 479.5 502.2 482.9 496.9 486.2 C491.6 489.5 487.0 491.9 480.0 495.7 C473.0 499.5 459.8 506.4 455.0 509.0 C450.2 511.6 451.6 507.7 451.4 511.0 C451.2 514.3 454.2 522.0 453.8 529.0 C453.4 536.0 451.0 545.9 449.0 553.1 C447.0 560.4 444.1 564.5 441.7 572.5 C439.3 580.5 436.7 591.8 434.5 601.4 C432.3 611.0 429.5 623.1 428.5 630.4 C427.5 637.6 427.5 640.1 428.5 644.9 C429.5 649.7 432.1 654.6 434.5 659.4 C436.9 664.2 440.8 669.1 443.0 673.9 C445.2 678.7 446.8 683.2 447.8 688.4 C448.8 693.6 449.6 699.7 449.0 705.3 C448.4 710.9 447.4 717.2 444.2 722.2 C441.0 727.2 435.3 732.2 430.0 735.0 C424.7 737.8 418.1 739.2 412.5 738.8 C406.9 738.4 400.7 735.0 396.3 732.5 C391.9 730.0 388.0 725.2 386.3 723.8 C384.6 722.3 386.9 721.5 386.3 723.8 C385.7 726.1 384.2 733.5 382.5 737.5 C380.8 741.5 380.1 743.8 376.3 747.5 C372.6 751.2 365.0 756.2 360.0 760.0 C355.0 763.8 351.7 767.9 346.3 770.0 C340.9 772.1 332.7 773.3 327.5 772.5 C322.3 771.7 318.5 767.9 315.0 765.0 C311.5 762.1 310.5 759.2 306.3 755.0 C302.1 750.8 294.1 745.1 290.0 740.0 C285.9 734.9 285.1 728.9 282.0 724.2 C278.9 719.5 274.0 713.9 271.3 711.6 C268.6 709.4 269.9 712.2 266.0 710.7 C262.1 709.2 252.8 706.7 248.0 702.7 C243.2 698.7 239.4 692.8 237.2 686.5 C234.9 680.2 234.9 672.2 234.5 665.0 C234.1 657.8 236.8 645.8 234.5 643.4 C232.2 641.0 225.3 648.0 220.5 650.4 C215.7 652.8 209.8 655.4 205.4 657.5 C201.0 659.6 197.0 661.0 194.3 663.0 C191.6 665.0 191.3 667.4 189.3 669.6 C187.3 671.8 185.2 674.7 182.3 676.1 C179.5 677.5 175.4 678.2 172.2 678.1 C169.0 678.0 165.8 677.2 163.1 675.6 C160.4 674.0 157.7 671.4 156.1 668.5 C154.5 665.6 154.1 662.2 153.6 658.5 C153.1 654.8 152.7 650.1 153.1 646.4 C153.5 642.7 154.4 639.1 156.1 636.3 C157.8 633.4 161.8 632.1 163.1 629.3 C164.3 626.4 163.1 622.4 163.6 619.2 C164.1 616.0 164.7 612.8 166.1 610.1 C167.5 607.4 170.7 608.2 172.2 603.1 C173.7 598.0 174.2 588.0 175.2 579.4 C176.2 570.8 176.0 559.6 178.2 551.2 C180.4 542.8 183.9 537.7 188.3 529.0 C192.7 520.3 200.1 507.9 204.4 498.8 C208.8 489.7 211.1 482.0 214.4 474.6 C217.8 467.2 220.1 461.9 224.5 454.5 C228.9 447.1 236.2 439.4 240.6 430.0 C244.9 420.6 246.7 407.7 250.6 398.0 C254.5 388.3 259.1 379.7 264.0 372.0 C268.9 364.3 275.5 358.6 280.0 352.0 C284.5 345.4 287.6 337.3 291.0 332.5 C294.4 327.7 297.5 326.4 300.3 323.0 C303.1 319.6 305.1 315.6 308.0 312.2 C310.9 308.8 313.8 305.5 317.5 302.8 C321.2 300.1 326.6 298.4 330.0 295.8 C333.4 293.2 334.2 289.6 337.8 287.2 C341.4 284.8 347.0 282.8 351.9 281.7 C356.8 280.6 362.2 280.6 366.9 280.3 C371.6 280.0 374.7 279.8 380.0 279.8 Z" fill="#808080" filter="url(#bl)"/>
<path d="M79.0 764.8 C82.3 761.4 92.2 751.4 99.0 744.5 C105.8 737.6 112.4 731.8 120.1 723.7 C127.8 715.7 137.6 702.9 145.1 696.2 C152.6 689.5 159.4 686.4 165.2 683.7 C171.0 681.0 175.2 680.3 180.0 680.0 C184.8 679.7 188.8 679.9 194.2 681.8 C199.6 683.7 206.7 687.2 212.3 691.4 C217.9 695.6 224.0 701.9 228.0 707.1 C232.0 712.3 234.7 717.6 236.5 722.8 C238.3 728.0 239.1 731.9 238.9 738.5 C238.7 745.1 236.5 755.8 235.3 762.7 C234.1 769.6 233.5 772.6 231.6 780.0 C229.7 787.4 227.9 796.0 224.0 807.0 C220.1 818.0 210.6 839.5 207.9 846.0  M182.9 677.0 C186.8 678.4 199.4 681.8 206.3 685.4 C213.2 689.0 219.3 693.5 224.4 698.7 C229.5 703.9 233.0 710.2 237.0 716.6 C241.0 723.0 244.3 728.0 248.2 737.0 C252.1 746.0 256.5 759.1 260.2 770.8 C263.9 782.5 268.1 797.6 270.3 807.0 C272.5 816.4 273.1 820.7 273.3 827.2 C273.5 833.7 271.6 842.9 271.3 846.0  M187.7 672.0 C190.8 673.2 200.2 676.1 206.3 679.3 C212.4 682.5 218.4 686.1 224.4 691.4 C230.4 696.6 237.5 704.3 242.5 710.8 C247.5 717.2 251.0 723.3 254.6 730.1 C258.2 736.9 261.3 743.5 264.3 751.8 C267.3 760.1 270.0 771.5 272.7 780.0 C275.4 788.5 278.1 794.5 280.4 803.0 C282.7 811.5 285.6 823.8 286.4 831.0 C287.2 838.2 285.6 843.5 285.4 846.0  M561.3 497.0 C563.1 500.9 569.2 514.8 572.4 520.3 C575.6 525.8 577.9 526.7 580.3 530.0 C582.7 533.3 585.8 537.0 586.7 540.0 C587.6 543.0 586.9 546.0 585.8 548.1 C584.7 550.2 582.4 551.5 580.3 552.7 C578.2 553.9 575.8 555.1 573.1 555.4 C570.4 555.7 566.6 554.2 564.0 554.5 C561.4 554.8 559.8 556.3 557.7 557.2 C555.6 558.1 553.1 559.8 551.3 559.9 C549.5 560.0 547.7 559.1 546.8 558.1 C545.9 557.1 545.8 554.9 545.9 553.6 C546.0 552.3 547.0 550.9 547.2 550.4  M585.8 546.3 C584.4 548.0 580.8 554.2 577.6 556.3 C574.4 558.4 570.3 558.5 566.7 559.0 C563.1 559.5 557.7 559.0 555.9 559.0  M566.7 559.0 C566.9 561.0 567.6 567.0 567.6 570.8 C567.6 574.6 567.3 579.6 566.7 581.7 C566.1 583.8 564.5 583.2 564.0 583.5  M565.8 583.5 C565.5 583.4 566.1 582.0 564.0 582.6 C561.9 583.2 556.4 585.3 553.1 587.1 C549.8 588.9 545.9 591.5 544.1 593.5 C542.3 595.5 542.0 598.0 542.3 598.9 C542.6 599.8 543.8 599.8 545.9 598.9 C548.0 598.0 552.0 595.3 555.0 593.5 C558.0 591.7 562.2 589.7 564.0 588.0 C565.8 586.3 565.5 584.2 565.8 583.5  M542.3 598.9 C542.6 599.8 542.3 602.5 544.1 604.3 C545.9 606.1 551.0 609.8 553.1 609.8 C555.2 609.8 556.3 606.6 556.8 604.3 C557.3 602.0 556.5 598.0 555.9 596.2 C555.3 594.4 553.6 594.0 553.1 593.5  M553.1 609.8 C552.0 610.8 548.8 613.9 546.5 616.0 C544.2 618.1 540.4 621.2 539.2 622.2  M539.2 622.2 C539.4 624.2 540.5 630.5 540.4 634.0 C540.3 637.5 540.0 640.2 538.5 643.0 C537.0 645.8 535.5 648.1 531.5 650.6 C527.5 653.1 521.2 656.9 514.6 658.0 C508.0 659.1 499.7 657.7 492.0 657.5 C484.3 657.3 474.5 656.3 468.3 657.0 C462.1 657.7 458.6 659.5 455.0 661.5 C451.4 663.5 449.0 666.1 447.0 669.0 C445.0 671.9 443.7 677.1 443.0 678.7  M443.0 678.7 C446.8 680.2 458.7 684.8 466.0 687.6 C473.3 690.4 478.9 693.1 487.0 695.4 C495.1 697.7 507.2 698.5 514.6 701.3 C522.0 704.1 527.6 708.1 531.5 712.0 C535.4 715.9 534.5 714.0 538.0 724.6 C541.5 735.2 548.8 761.3 552.7 775.4 C556.6 789.5 559.1 797.4 561.2 809.2 C563.3 821.0 564.7 839.9 565.4 846.0  M465.0 686.5 C466.9 692.9 473.2 709.4 476.5 724.6 C479.8 739.8 483.1 757.3 485.0 777.5 C486.9 797.7 487.7 834.6 488.2 846.0  M487.0 695.4 C488.8 701.0 494.5 713.6 497.7 729.0 C500.9 744.4 503.9 768.5 506.0 788.0 C508.1 807.5 509.3 836.3 510.0 846.0 " fill="none" stroke="#111" stroke-width="2.1" stroke-linecap="round" stroke-linejoin="round"/>
</g></svg>
<div style="position:absolute;left:612px;top:189px;width:434px;height:172px;background:#8c8ca8;border:1px solid #6a6a8a;border-radius:7px 7px 0 0"></div>
<div style="position:absolute;left:613px;top:190px;width:432px;height:170px;border:1px solid #f4f4f8;border-radius:6px 6px 0 0"></div>
<div style="position:absolute;left:613px;top:190px;width:432px;height:28px;border-radius:6px 6px 0 0;background:linear-gradient(to bottom,#f8f8fc 0,#f8f8fc 1px,#b0b0cc 2px,#a9a9c6 4px,#bcbfce 11px,#d8dae2 18px,#f4f4f6 24px,#fbfbfb 26px,#d0d0dc 27px,#7a7a98 28px)"></div>
<div style="position:absolute;left:615px;top:218px;width:428px;height:140px;background:#ececec"></div>
<div style="position:absolute;left:618.8px;top:198.35px;font-size:14px;line-height:14px;color:#000;font-weight:700;white-space:nowrap;transform:scaleX(0.9);transform-origin:0 0;text-shadow:1px 1px 0 rgba(120,120,150,0.3)">New Layer</div>
<div style="position:absolute;left:1019px;top:194px;width:21px;height:21px;border:1px solid #b04040;border-radius:3px;background:linear-gradient(135deg,#f08c7c,#e05a4c 45%,#c83c30)"></div>
<svg style="position:absolute;left:1019px;top:194px" width="21" height="21"><path d="M5.5 5.5 L15.5 15.5 M15.5 5.5 L5.5 15.5" stroke="#fff" stroke-width="2.2"/></svg>
<div style="position:absolute;left:624.5px;top:232.59px;font-size:12px;line-height:12px;color:#000;font-weight:400;white-space:nowrap;transform:scaleX(1.0);transform-origin:0 0;text-decoration-thickness:1px;text-underline-offset:1.5px"><u>N</u>ame:</div>
<div style="position:absolute;left:664px;top:228px;width:281px;height:22px;border:1px solid #a9b5c4;background:#fff"></div>
<div style="position:absolute;left:669.5px;top:233.19px;font-size:12px;line-height:12px;color:#000;font-weight:400;white-space:nowrap;transform:scaleX(1.0);transform-origin:0 0;">Layer 1</div>
<div style="position:absolute;left:961px;top:229px;width:71px;height:18px;border:1px solid #1f4f7d;border-radius:3px;background:linear-gradient(to bottom,#ffffff,#f4f4f8 30%,#dcdce6 75%,#c4c4d4);box-shadow:inset 0 1px 0 #cfe0f8,inset 0 -2px 0 #6894e0,inset 1px 0 0 #b8d0f4,inset -1px 0 0 #b8d0f4;"></div>
<div style="position:absolute;left:961px;top:232.09px;width:71px;text-align:center;font-size:12px;line-height:12px;white-space:nowrap;color:#000"><span style="display:inline-block;transform:scaleX(1.0)">OK</span></div>
<div style="position:absolute;left:961px;top:257px;width:71px;height:18px;border:1px solid #1f4f7d;border-radius:3px;background:linear-gradient(to bottom,#ffffff,#f4f4f8 30%,#dcdce6 75%,#c4c4d4);"></div>
<div style="position:absolute;left:961px;top:260.09px;width:71px;text-align:center;font-size:12px;line-height:12px;white-space:nowrap;color:#000"><span style="display:inline-block;transform:scaleX(1.0)">Cancel</span></div>
<div style="position:absolute;left:664px;top:257px;width:13px;height:13px;border:1px solid #1c5180;background:linear-gradient(135deg,#dcdcd6,#fcfcfc)"></div>
<div style="position:absolute;left:679px;top:258.49px;font-size:12px;line-height:12px;color:#000;font-weight:400;white-space:nowrap;transform:scaleX(0.99);transform-origin:0 0;">Use Previous Layer to Create Clipping Mask</div>
<div style="position:absolute;left:628.5px;top:283.79px;font-size:12px;line-height:12px;color:#000;font-weight:400;white-space:nowrap;transform:scaleX(1.0);transform-origin:0 0;text-decoration-thickness:1px;text-underline-offset:1.5px"><u>C</u>olor:</div>
<div style="position:absolute;left:664px;top:278px;width:146px;height:23px;border:1px solid #7f9db9;background:#fff"></div>
<div style="position:absolute;left:672px;top:282px;width:16px;height:15px;border:1px solid #000;background:#fff"></div>
<div style="position:absolute;left:692.5px;top:283.89px;font-size:12px;line-height:12px;color:#000;font-weight:400;white-space:nowrap;">None</div>
<div style="position:absolute;left:792px;top:279px;width:17px;height:21px;border:1px solid #b8c4dc;border-radius:2px;background:linear-gradient(to bottom,#e8ecf8,#d4d8ec 60%,#c0c4dc)"></div>
<svg style="position:absolute;left:792px;top:279px" width="17" height="21"><path d="M5.0 8.5 L8.5 12.0 L12.0 8.5" stroke="#222" stroke-width="2" fill="none"/></svg>
<div style="position:absolute;left:625.5px;top:311.39px;font-size:12px;line-height:12px;color:#000;font-weight:400;white-space:nowrap;transform:scaleX(1.0);transform-origin:0 0;text-decoration-thickness:1px;text-underline-offset:1.5px"><u>M</u>ode:</div>
<div style="position:absolute;left:664px;top:307px;width:152px;height:22px;border:1px solid #7f9db9;background:#fff"></div>
<div style="position:absolute;left:670.5px;top:311.59px;font-size:12px;line-height:12px;color:#000;font-weight:400;white-space:nowrap;transform:scaleX(1.0);transform-origin:0 0;">Normal</div>
<div style="position:absolute;left:798px;top:308px;width:17px;height:20px;border:1px solid #b8c4dc;border-radius:2px;background:linear-gradient(to bottom,#e8ecf8,#d4d8ec 60%,#c0c4dc)"></div>
<svg style="position:absolute;left:798px;top:308px" width="17" height="20"><path d="M5.0 8.0 L8.5 11.5 L12.0 8.0" stroke="#222" stroke-width="2" fill="none"/></svg>
<div style="position:absolute;left:824.5px;top:311.39px;font-size:12px;line-height:12px;color:#000;font-weight:400;white-space:nowrap;transform:scaleX(1.0);transform-origin:0 0;text-decoration-thickness:1px;text-underline-offset:1.5px"><u>O</u>pacity:</div>
<div style="position:absolute;left:874px;top:307px;width:54px;height:21px;border:1px solid #7f9db9;background:#fff"></div>
<div style="position:absolute;left:879.5px;top:311.59px;font-size:12px;line-height:12px;color:#000;font-weight:400;white-space:nowrap;transform:scaleX(1.0);transform-origin:0 0;">100</div>
<div style="position:absolute;left:908px;top:308px;width:19px;height:19px;border:1px solid #b8c4dc;border-radius:2px;background:linear-gradient(#f4f4f8,#d4d4e0)"></div>
<svg style="position:absolute;left:908px;top:308px" width="19" height="19"><path d="M8 6 L11 9.5 L8 13" stroke="#222" stroke-width="1.8" fill="none"/></svg>
<div style="position:absolute;left:931.5px;top:311.39px;font-size:12px;line-height:12px;color:#000;font-weight:400;white-space:nowrap;">%</div>
<div style="position:absolute;left:664px;top:335px;width:13px;height:13px;border:1px solid #cac8bb;background:#fff"></div>
<div style="position:absolute;left:680px;top:336.75px;font-size:12.3px;line-height:12.3px;color:#a6a898;font-weight:400;white-space:nowrap;">(No neutral color exists for Normal mode.)</div>
<div style="position:absolute;left:1115px;top:81px;width:165px;height:18px;background:#5a5a5a;border-top:1px solid #6c6c6c;border-left:1px solid #6c6c6c"></div>
<div style="position:absolute;left:1115px;top:99px;width:33px;height:240px;background:#5a5a5a;border-left:1px solid #6c6c6c;border-radius:0 0 0 4px"></div>
<div style="position:absolute;left:1144px;top:99px;width:94px;height:321px;background:#5a5a5a;border-radius:0 0 4px 4px"></div>
<div style="position:absolute;left:1235px;top:99px;width:44px;height:647px;background:#5a5a5a;border-radius:0 0 4px 4px"></div>
<svg style="position:absolute;left:1123px;top:85px" width="7" height="12"><path d="M0.5 0 V12 M3.5 0 V12 M6.5 0 V12" stroke="#9c9c9c" stroke-width="1"/></svg>
<svg style="position:absolute;left:1135px;top:87px" width="10" height="8"><path d="M0 4 L4.5 0 V8 Z M5 4 L9.5 0 V8 Z" fill="#c8c8c8"/></svg>
<svg style="position:absolute;left:1152px;top:85px" width="7" height="12"><path d="M0.5 0 V12 M3.5 0 V12 M6.5 0 V12" stroke="#9c9c9c" stroke-width="1"/></svg>
<svg style="position:absolute;left:1225px;top:87px" width="10" height="8"><path d="M0 4 L4.5 0 V8 Z M5 4 L9.5 0 V8 Z" fill="#c8c8c8"/></svg>
<svg style="position:absolute;left:1265px;top:87px" width="10" height="8"><path d="M0 4 L4.5 0 V8 Z M5 4 L9.5 0 V8 Z" fill="#c8c8c8"/></svg>
<div style="position:absolute;left:1119px;top:99px;width:27px;height:95px;background:#ececec;border-radius:3px 3px 2px 2px;overflow:hidden"><div style="position:absolute;left:0;top:0;width:27px;height:9px;background:linear-gradient(to bottom,#fafafa 0,#fafafa 1px,#e4e4e4 1px,#d2d2d2 7px,#a8a8a8 7px,#a8a8a8 8px,#fcfcfc 8px)"></div></div>
<div style="position:absolute;left:1119px;top:196px;width:27px;height:68px;background:#ececec;border-radius:3px 3px 2px 2px;overflow:hidden"><div style="position:absolute;left:0;top:0;width:27px;height:9px;background:linear-gradient(to bottom,#fafafa 0,#fafafa 1px,#e4e4e4 1px,#d2d2d2 7px,#a8a8a8 7px,#a8a8a8 8px,#fcfcfc 8px)"></div></div>
<div style="position:absolute;left:1119px;top:266px;width:27px;height:67px;background:#ececec;border-radius:3px 3px 2px 2px;overflow:hidden"><div style="position:absolute;left:0;top:0;width:27px;height:9px;background:linear-gradient(to bottom,#fafafa 0,#fafafa 1px,#e4e4e4 1px,#d2d2d2 7px,#a8a8a8 7px,#a8a8a8 8px,#fcfcfc 8px)"></div></div>
<div style="position:absolute;left:1148px;top:99px;width:88px;height:122px;background:#ececec;border-radius:3px 3px 2px 2px;overflow:hidden"><div style="position:absolute;left:0;top:0;width:88px;height:9px;background:linear-gradient(to bottom,#fafafa 0,#fafafa 1px,#e4e4e4 1px,#d2d2d2 7px,#a8a8a8 7px,#a8a8a8 8px,#fcfcfc 8px)"></div></div>
<div style="position:absolute;left:1148px;top:223px;width:88px;height:95px;background:#ececec;border-radius:3px 3px 2px 2px;overflow:hidden"><div style="position:absolute;left:0;top:0;width:88px;height:9px;background:linear-gradient(to bottom,#fafafa 0,#fafafa 1px,#e4e4e4 1px,#d2d2d2 7px,#a8a8a8 7px,#a8a8a8 8px,#fcfcfc 8px)"></div></div>
<div style="position:absolute;left:1148px;top:320px;width:88px;height:95px;background:#ececec;border-radius:3px 3px 2px 2px;overflow:hidden"><div style="position:absolute;left:0;top:0;width:88px;height:9px;background:linear-gradient(to bottom,#fafafa 0,#fafafa 1px,#e4e4e4 1px,#d2d2d2 7px,#a8a8a8 7px,#a8a8a8 8px,#fcfcfc 8px)"></div></div>
<div style="position:absolute;left:1238px;top:99px;width:38px;height:644px;background:#ececec;border-radius:3px 3px 2px 2px;overflow:hidden"><div style="position:absolute;left:0;top:0;width:38px;height:9px;background:linear-gradient(to bottom,#fafafa 0,#fafafa 1px,#e4e4e4 1px,#d2d2d2 7px,#a8a8a8 7px,#a8a8a8 8px,#fcfcfc 8px)"></div></div>
<div style="position:absolute;left:1121px;top:113px;width:22px;height:22px;border:1px solid #d2d2d2;border-radius:3px;background:linear-gradient(to bottom,#e2e2e2,#eeeeee)"></div>
<svg style="position:absolute;left:1121px;top:113px;filter:grayscale(1)" width="22" height="22" viewBox="0 0 22 22"><rect x="5.5" y="3.5" width="4.5" height="4" fill="#fff" stroke="#222" stroke-width="1.1"/><rect x="5.5" y="9.5" width="4.5" height="4" fill="#fff" stroke="#222" stroke-width="1.1"/><rect x="5" y="15" width="5.5" height="5" fill="#555"/><path d="M15.5 5 Q20.5 7 20 11.5 Q19.5 16 16 18.5" stroke="#333" stroke-width="2.2" fill="none"/><path d="M13.5 3 L18.5 3.5 L15 8 Z" fill="#333"/></svg>
<div style="position:absolute;left:1121px;top:140px;width:22px;height:22px;border:1px solid #d2d2d2;border-radius:3px;background:linear-gradient(to bottom,#e2e2e2,#eeeeee)"></div>
<svg style="position:absolute;left:1121px;top:140px;filter:grayscale(1)" width="22" height="22" viewBox="0 0 22 22"><defs><linearGradient id="ag" x1="0" y1="0" x2="1" y2="1"><stop offset="0" stop-color="#fafafa"/><stop offset="1" stop-color="#c8c8c8"/></linearGradient><linearGradient id="ag2" x1="0" y1="0" x2="1" y2="0"><stop offset="0" stop-color="#222"/><stop offset="1" stop-color="#777"/></linearGradient></defs><rect x="3" y="5.5" width="17" height="12" fill="url(#ag)" stroke="#222" stroke-width="1.4"/><path d="M7 7.5 L17.5 11.5 L7 15.5 Z" fill="url(#ag2)"/></svg>
<div style="position:absolute;left:1121px;top:167px;width:22px;height:22px;border:1px solid #d2d2d2;border-radius:3px;background:linear-gradient(to bottom,#e2e2e2,#eeeeee)"></div>
<svg style="position:absolute;left:1121px;top:167px;filter:grayscale(1)" width="22" height="22" viewBox="0 0 22 22"><path d="M5 5 L19 15" stroke="#555" stroke-width="2.6"/><path d="M2.5 3.5 Q4 1.5 7 3 L5.5 5.5 L7.5 7 L9 4.5 Q10 8 7 9 Q4 9 2.5 6 Z" fill="#555"/><circle cx="18.5" cy="14.5" r="1" fill="#fff"/><path d="M19 2.5 L11 11" stroke="#222" stroke-width="1.6"/><path d="M11.5 10.5 L4 18" stroke="#111" stroke-width="4" stroke-linecap="round"/><path d="M8 13.5 L5.5 16" stroke="#999" stroke-width="0.8"/></svg>
<div style="position:absolute;left:1121px;top:210px;width:22px;height:22px;border:1px solid #d2d2d2;border-radius:3px;background:linear-gradient(to bottom,#e2e2e2,#eeeeee)"></div>
<svg style="position:absolute;left:1121px;top:210px;filter:grayscale(1)" width="22" height="22" viewBox="0 0 22 22"><path d="M11.5 13 V4" stroke="#444" stroke-width="1.6"/><path d="M10.5 13 L6 7" stroke="#555" stroke-width="1.3"/><path d="M12.5 13 L16 8" stroke="#555" stroke-width="1.3"/><ellipse cx="5.5" cy="5.5" rx="1.8" ry="3.2" transform="rotate(-25 5.5 5.5)" fill="#444"/><ellipse cx="17" cy="6.5" rx="3" ry="1.8" transform="rotate(-20 17 6.5)" fill="#333"/><path d="M11 2 L12 2 L12.2 6 L10.8 6 Z" fill="#666"/><rect x="8" y="12.5" width="7" height="6.5" rx="1" fill="#fff" stroke="#111" stroke-width="1.8"/></svg>
<div style="position:absolute;left:1121px;top:237px;width:22px;height:22px;border:1px solid #d2d2d2;border-radius:3px;background:linear-gradient(to bottom,#e2e2e2,#eeeeee)"></div>
<svg style="position:absolute;left:1121px;top:237px;filter:grayscale(1)" width="22" height="22" viewBox="0 0 22 22"><path d="M3 4.5 H9 M3 7.5 H9 M3 10.5 H8" stroke="#222" stroke-width="1.1" stroke-dasharray="1.2 0.8"/><circle cx="13" cy="8" r="3" fill="#444"/><circle cx="12.2" cy="7.2" r="1" fill="#aaa"/><rect x="12" y="10" width="2" height="4" fill="#222"/><rect x="6" y="14" width="14" height="6" rx="1.5" fill="#e8e8e8" stroke="#222" stroke-width="1.5"/><path d="M10 15.5 H16 L13 19 Z" fill="#111"/></svg>
<div style="position:absolute;left:1121px;top:280px;width:22px;height:22px;border:1px solid #d2d2d2;border-radius:3px;background:linear-gradient(to bottom,#e2e2e2,#eeeeee)"></div>
<svg style="position:absolute;left:1121px;top:280px;filter:grayscale(1)" width="22" height="22" viewBox="0 0 22 22"><path d="M4 18.5 L9.5 4.5 L11 4.5 L16.5 18.5 M6.2 13.5 H14.3" stroke="#3a3a3a" stroke-width="1.7" fill="none"/><path d="M17.5 3 V20" stroke="#111" stroke-width="1.2"/></svg>
<div style="position:absolute;left:1121px;top:307px;width:22px;height:22px;border:1px solid #d2d2d2;border-radius:3px;background:linear-gradient(to bottom,#e2e2e2,#eeeeee)"></div>
<svg style="position:absolute;left:1121px;top:307px;filter:grayscale(1)" width="22" height="22" viewBox="0 0 22 22"><path d="M12.5 4 V19 M15.8 4 V19" stroke="#333" stroke-width="1.7"/><path d="M11 4 H17" stroke="#333" stroke-width="1.6"/><path d="M12.5 4 Q6 4 6 8 Q6 12 12.5 12 Z" fill="#333"/></svg>
<div style="position:absolute;left:1150px;top:113px;width:22px;height:22px;border:1px solid #d2d2d2;border-radius:3px;background:linear-gradient(to bottom,#e2e2e2,#eeeeee)"></div>
<svg style="position:absolute;left:1150px;top:113px;filter:grayscale(1)" width="22" height="22" viewBox="0 0 22 22"><circle cx="11" cy="11" r="5.2" fill="none" stroke="#333" stroke-width="1.5"/><path d="M11 2 V20 M2 11 H20 M4.8 4.8 L17.2 17.2 M17.2 4.8 L4.8 17.2" stroke="#3a3a3a" stroke-width="1.1"/><circle cx="11" cy="11" r="1.8" fill="#222"/></svg>
<div style="position:absolute;left:1177px;top:119.95px;font-size:11.5px;line-height:11.5px;color:#000;font-weight:400;white-space:nowrap;transform:scaleX(0.95);transform-origin:0 0;">Navigator</div>
<div style="position:absolute;left:1150px;top:140px;width:22px;height:22px;border:1px solid #d2d2d2;border-radius:3px;background:linear-gradient(to bottom,#e2e2e2,#eeeeee)"></div>
<svg style="position:absolute;left:1150px;top:140px;filter:grayscale(1)" width="22" height="22" viewBox="0 0 22 22"><rect x="3.5" y="4.5" width="15" height="12" fill="#fff" stroke="#222" stroke-width="1"/><path d="M19 5 V17.5 H4" stroke="#888" stroke-width="1" fill="none"/><path d="M4 16 V12.5 L5.5 11.5 L6.5 12 L8 10 L9 10.5 L10 8 L11 9.5 L12 6.5 L12.8 8.5 L13.8 6 L14.5 9 L15.5 8.5 L16.5 11 L18 12 V16 Z" fill="#3a3a3a"/></svg>
<div style="position:absolute;left:1177px;top:146.95px;font-size:11.5px;line-height:11.5px;color:#000;font-weight:400;white-space:nowrap;transform:scaleX(0.95);transform-origin:0 0;">Histogram</div>
<div style="position:absolute;left:1150px;top:167px;width:22px;height:22px;border:1px solid #d2d2d2;border-radius:3px;background:linear-gradient(to bottom,#e2e2e2,#eeeeee)"></div>
<svg style="position:absolute;left:1150px;top:167px;filter:grayscale(1)" width="22" height="22" viewBox="0 0 22 22"><rect x="4.5" y="3.5" width="13" height="14" fill="#fff" stroke="#222" stroke-width="1"/><path d="M18 4 V18 H5" stroke="#888" stroke-width="1" fill="none"/><path d="M6 6.5 H11 M6 8.5 H11 M6 10.5 H11" stroke="#333" stroke-width="0.9"/><rect x="12" y="5.5" width="4" height="6" fill="#555"/><rect x="6" y="13" width="10" height="2.5" fill="#777"/></svg>
<div style="position:absolute;left:1177px;top:173.95px;font-size:11.5px;line-height:11.5px;color:#000;font-weight:400;white-space:nowrap;transform:scaleX(0.95);transform-origin:0 0;">Layer C...</div>
<div style="position:absolute;left:1150px;top:194px;width:22px;height:22px;border:1px solid #d2d2d2;border-radius:3px;background:linear-gradient(to bottom,#e2e2e2,#eeeeee)"></div>
<svg style="position:absolute;left:1150px;top:194px;filter:grayscale(1)" width="22" height="22" viewBox="0 0 22 22"><defs><radialGradient id="ig" cx="0.4" cy="0.3" r="0.75"><stop offset="0" stop-color="#8a8a8a"/><stop offset="0.6" stop-color="#444"/><stop offset="1" stop-color="#222"/></radialGradient></defs><circle cx="11" cy="11.5" r="8" fill="url(#ig)"/><circle cx="11" cy="6.8" r="1.5" fill="#fff"/><path d="M9 9.5 H12 V15.5 H13.3 V17 H8.7 V15.5 H10 V11 H9 Z" fill="#fff"/></svg>
<div style="position:absolute;left:1177px;top:200.95px;font-size:11.5px;line-height:11.5px;color:#000;font-weight:400;white-space:nowrap;transform:scaleX(0.95);transform-origin:0 0;">Info</div>
<div style="position:absolute;left:1150px;top:237px;width:22px;height:22px;border:1px solid #d2d2d2;border-radius:3px;background:linear-gradient(to bottom,#e2e2e2,#eeeeee)"></div>
<svg style="position:absolute;left:1150px;top:237px;filter:grayscale(1)" width="22" height="22" viewBox="0 0 22 22"><path d="M3 12 Q3 5 11 4 Q19 4 19 8 Q19 11 15 12 Q13 13 15 15 Q15 19 9 19 Q3 19 3 12 Z" fill="#444"/><circle cx="7" cy="10" r="1.4" fill="#eee"/><circle cx="10" cy="7" r="1.4" fill="#eee"/><circle cx="14" cy="6.5" r="1.4" fill="#eee"/><circle cx="6.5" cy="15" r="1.4" fill="#eee"/><circle cx="10" cy="16" r="1.4" fill="#eee"/></svg>
<div style="position:absolute;left:1177px;top:243.95px;font-size:11.5px;line-height:11.5px;color:#000;font-weight:400;white-space:nowrap;transform:scaleX(0.95);transform-origin:0 0;">Color</div>
<div style="position:absolute;left:1150px;top:264px;width:22px;height:22px;border:1px solid #d2d2d2;border-radius:3px;background:linear-gradient(to bottom,#e2e2e2,#eeeeee)"></div>
<svg style="position:absolute;left:1150px;top:264px;filter:grayscale(1)" width="22" height="22" viewBox="0 0 22 22"><rect x="2.5" y="4.5" width="17" height="13" fill="#2a2a2a"/><rect x="3.5" y="5.5" width="3" height="3" fill="#3a3a3a"/><rect x="7.5" y="5.5" width="3" height="3" fill="#8a8a8a"/><rect x="11.5" y="5.5" width="3" height="3" fill="#b0b0b0"/><rect x="15.5" y="5.5" width="3" height="3" fill="#ffffff"/><rect x="3.5" y="9.5" width="3" height="3" fill="#6a6a6a"/><rect x="7.5" y="9.5" width="3" height="3" fill="#a0a0a0"/><rect x="11.5" y="9.5" width="3" height="3" fill="#7a7a7a"/><rect x="15.5" y="9.5" width="3" height="3" fill="#f0f0f0"/><rect x="3.5" y="13.5" width="3" height="3" fill="#9a9a9a"/><rect x="7.5" y="13.5" width="3" height="3" fill="#e0e0e0"/><rect x="11.5" y="13.5" width="3" height="3" fill="#ffffff"/><rect x="15.5" y="13.5" width="3" height="3" fill="#c8c8c8"/></svg>
<div style="position:absolute;left:1177px;top:270.95px;font-size:11.5px;line-height:11.5px;color:#000;font-weight:400;white-space:nowrap;transform:scaleX(0.95);transform-origin:0 0;">Swatches</div>
<div style="position:absolute;left:1150px;top:291px;width:22px;height:22px;border:1px solid #d2d2d2;border-radius:3px;background:linear-gradient(to bottom,#e2e2e2,#eeeeee)"></div>
<svg style="position:absolute;left:1150px;top:291px;filter:grayscale(1)" width="22" height="22" viewBox="0 0 22 22"><rect x="8" y="4" width="11" height="11" fill="#f4f4f4" stroke="#333" stroke-width="1.2"/><text x="2" y="19" font-size="11" font-style="italic" font-weight="700" fill="#222" font-family="Liberation Serif">fx</text></svg>
<div style="position:absolute;left:1177px;top:297.95px;font-size:11.5px;line-height:11.5px;color:#000;font-weight:400;white-space:nowrap;transform:scaleX(0.95);transform-origin:0 0;">Styles</div>
<div style="position:absolute;left:1150px;top:334px;width:22px;height:22px;border:1px solid #d2d2d2;border-radius:3px;background:linear-gradient(to bottom,#e2e2e2,#eeeeee)"></div>
<svg style="position:absolute;left:1150px;top:334px;filter:grayscale(1)" width="22" height="22" viewBox="0 0 22 22"><path d="M3 15 L12 10.5 L21 15 L12 19.5 Z" fill="#333"/><path d="M3.5 11.5 L12 7.5 L20.5 11.5 L12 16 Z" fill="#8a8a8a"/><path d="M3 8 L12 3.5 L21 8 L12 12.5 Z" fill="#fafafa" stroke="#666" stroke-width="0.8"/></svg>
<div style="position:absolute;left:1177px;top:340.95px;font-size:11.5px;line-height:11.5px;color:#000;font-weight:400;white-space:nowrap;transform:scaleX(0.95);transform-origin:0 0;">Layers</div>
<div style="position:absolute;left:1150px;top:361px;width:22px;height:22px;border:1px solid #d2d2d2;border-radius:3px;background:linear-gradient(to bottom,#e2e2e2,#eeeeee)"></div>
<svg style="position:absolute;left:1150px;top:361px;filter:grayscale(1)" width="22" height="22" viewBox="0 0 22 22"><defs><radialGradient id="cg1" cx="0.35" cy="0.3" r="0.8"><stop offset="0" stop-color="#bbb"/><stop offset="1" stop-color="#666"/></radialGradient><radialGradient id="cg2" cx="0.35" cy="0.35" r="0.8"><stop offset="0" stop-color="#777"/><stop offset="1" stop-color="#222"/></radialGradient><radialGradient id="cg3" cx="0.4" cy="0.35" r="0.8"><stop offset="0" stop-color="#aaa"/><stop offset="1" stop-color="#555"/></radialGradient></defs><circle cx="11" cy="8" r="5.5" fill="url(#cg1)"/><circle cx="7.8" cy="13.2" r="5.5" fill="url(#cg2)"/><circle cx="14.2" cy="13.2" r="5.5" fill="url(#cg3)"/><path d="M11 8.5 Q13.5 11 13 14.5 Q11 16.5 9 14.5 Q8.5 11 11 8.5 Z" fill="#f4f4f4"/></svg>
<div style="position:absolute;left:1177px;top:367.95px;font-size:11.5px;line-height:11.5px;color:#000;font-weight:400;white-space:nowrap;transform:scaleX(0.95);transform-origin:0 0;">Channels</div>
<div style="position:absolute;left:1150px;top:388px;width:22px;height:22px;border:1px solid #d2d2d2;border-radius:3px;background:linear-gradient(to bottom,#e2e2e2,#eeeeee)"></div>
<svg style="position:absolute;left:1150px;top:388px;filter:grayscale(1)" width="22" height="22" viewBox="0 0 22 22"><path d="M4 18 Q6 6 11 6 Q16 6 18 18 Z" fill="#ddd"/><path d="M4 18 Q6 6 11 6 Q16 6 18 18" stroke="#333" stroke-width="1.2" fill="none"/><path d="M4 18 H18" stroke="#333" stroke-width="1"/><rect x="2.5" y="16.5" width="3" height="3" fill="#fff" stroke="#222"/><rect x="16.5" y="16.5" width="3" height="3" fill="#fff" stroke="#222"/><rect x="3" y="4" width="3" height="3" fill="#555"/><rect x="16" y="4" width="3" height="3" fill="#222"/><path d="M6 5.5 H16" stroke="#555" stroke-width="1"/></svg>
<div style="position:absolute;left:1177px;top:394.95px;font-size:11.5px;line-height:11.5px;color:#000;font-weight:400;white-space:nowrap;transform:scaleX(0.95);transform-origin:0 0;">Paths</div>
<div style="position:absolute;left:1239px;top:109px;width:36px;height:23px;background:radial-gradient(ellipse at 20% 10%,#3c7cd8,#1c4c9c 60%,#0f3678)"></div>
<div style="position:absolute;left:1248px;top:111.80px;font-size:14.5px;line-height:14.5px;color:#fff;font-weight:400;white-space:nowrap;letter-spacing:0.3px">Ps</div>
<svg style="position:absolute;left:1243px;top:135px;filter:grayscale(1)" width="28" height="20" viewBox="0 0 28 20"><path d="M5.5 2 L5.5 12 L8 9.5 L12.5 9.5 Z" fill="#222"/><path d="M12 12.5 H21 M16.5 8 V17" stroke="#222" stroke-width="1.3"/><path d="M14.5 10 L16.5 8 L18.5 10 M14.5 15 L16.5 17 L18.5 15 M14 10.5 L12 12.5 L14 14.5 M19 10.5 L21 12.5 L19 14.5" stroke="#222" stroke-width="1.3" fill="none"/></svg>
<svg style="position:absolute;left:1243px;top:157px;filter:grayscale(1)" width="28" height="20" viewBox="0 0 28 20"><ellipse cx="13" cy="10" rx="7.5" ry="6" fill="none" stroke="#333" stroke-width="1.2" stroke-dasharray="2.5 1.5"/><path d="M22 18 H25 V15 Z" fill="#111"/></svg>
<svg style="position:absolute;left:1243px;top:179px;filter:grayscale(1)" width="28" height="20" viewBox="0 0 28 20"><ellipse cx="14" cy="7" rx="7" ry="4.5" fill="none" stroke="#333" stroke-width="1.3"/><path d="M8 10 Q6 14 9 16 L7 19" stroke="#333" stroke-width="1.3" fill="none"/><path d="M22 18 H25 V15 Z" fill="#111"/></svg>
<svg style="position:absolute;left:1243px;top:201px;filter:grayscale(1)" width="28" height="20" viewBox="0 0 28 20"><path d="M9 2 V10 M5 6 H13 M6.2 3.2 L11.8 8.8 M11.8 3.2 L6.2 8.8" stroke="#444" stroke-width="0.9"/><circle cx="9" cy="6" r="1.3" fill="#222"/><path d="M10.5 7.5 L20.5 17.5" stroke="#1a1a1a" stroke-width="2.4"/><path d="M22 18 H25 V15 Z" fill="#111"/></svg>
<svg style="position:absolute;left:1243px;top:223px;filter:grayscale(1)" width="28" height="20" viewBox="0 0 28 20"><path d="M7 2 V15 H22 M4 5 H19 V18" stroke="#222" stroke-width="2.2" fill="none"/><path d="M8 14 L18 4" stroke="#222" stroke-width="1.3"/></svg>
<svg style="position:absolute;left:1243px;top:245px;filter:grayscale(1)" width="28" height="20" viewBox="0 0 28 20"><path d="M5 17 L21 5 L19 9 L7 18 Z" fill="#333"/><path d="M6 4 L12 10 M6 4 V8 M6 4 H10" stroke="#222" stroke-width="1.5" fill="none"/><path d="M22 18 H25 V15 Z" fill="#111"/></svg>
<div style="position:absolute;left:1243px;top:270px;width:28px;height:1px;background:#a8a8a8"></div>
<svg style="position:absolute;left:1243px;top:273px;filter:grayscale(1)" width="28" height="20" viewBox="0 0 28 20"><path d="M7.5 1 V10 M3 5.5 H12" stroke="#222" stroke-width="0.9"/><path d="M10 11 Q15.5 5 21 10.5 Q15.5 15.5 10 11 Z" fill="#fff" stroke="#333" stroke-width="1.3"/><path d="M10 10.5 Q15.5 5.5 21 10" stroke="#111" stroke-width="2" fill="none"/><circle cx="15.3" cy="10.6" r="2.6" fill="#111"/><circle cx="14.6" cy="9.8" r="0.8" fill="#ccc"/><path d="M22 18 H25 V15 Z" fill="#111"/></svg>
<svg style="position:absolute;left:1243px;top:295px;filter:grayscale(1)" width="28" height="20" viewBox="0 0 28 20"><path d="M13 10 L22.5 2.5" stroke="#333" stroke-width="1.4"/><path d="M5.5 17.5 Q6 12 11 9.5 L14 12 Q11.5 17 5.5 17.5 Z" fill="#555" stroke="#222" stroke-width="0.8"/><path d="M7 16 Q9 12.5 11.5 11" stroke="#bbb" stroke-width="1" fill="none"/><path d="M22 18 H25 V15 Z" fill="#111"/></svg>
<svg style="position:absolute;left:1243px;top:317px;filter:grayscale(1)" width="28" height="20" viewBox="0 0 28 20"><circle cx="12.6" cy="4.6" r="3" fill="#555"/><circle cx="11.8" cy="3.8" r="1" fill="#bbb"/><rect x="11.6" y="7" width="2" height="5" fill="#333"/><rect x="5.5" y="11.5" width="14" height="6.5" rx="1.5" fill="#f2f2f2" stroke="#222" stroke-width="1.4"/><path d="M5.5 14 H19.5" stroke="#444" stroke-width="0.8"/><path d="M9.5 13.5 H15.5 L12.5 17 Z" fill="#111"/><path d="M22 18 H25 V15 Z" fill="#111"/></svg>
<svg style="position:absolute;left:1243px;top:339px;filter:grayscale(1)" width="28" height="20" viewBox="0 0 28 20"><path d="M13 10 L22 3" stroke="#333" stroke-width="1.4"/><path d="M5.5 17 Q6 12 11 9.5 L14 12 Q11.5 16.5 5.5 17 Z" fill="#555" stroke="#222" stroke-width="0.8"/><path d="M9 7.5 Q13 4 17 6" stroke="#222" stroke-width="1.1" fill="none"/><path d="M7.5 7.8 L10.5 6 L10 9 Z" fill="#222"/><path d="M16 10 Q18.5 13 17.5 18" stroke="#222" stroke-width="1" stroke-dasharray="1 1.2" fill="none"/><path d="M22 18 H25 V15 Z" fill="#111"/></svg>
<svg style="position:absolute;left:1243px;top:361px;filter:grayscale(1)" width="28" height="20" viewBox="0 0 28 20"><path d="M5.5 12.5 L12.5 6 H21 L14.5 12.5 Z" fill="#fafafa" stroke="#222" stroke-width="1.3" stroke-linejoin="round"/><path d="M5.5 12.5 V15.5 H14.5 L21 9 V6" stroke="#222" stroke-width="1.3" fill="#ddd" stroke-linejoin="round"/><path d="M14.5 12.5 V15.5" stroke="#222" stroke-width="1.1"/><path d="M22 18 H25 V15 Z" fill="#111"/></svg>
<svg style="position:absolute;left:1243px;top:383px;filter:grayscale(1)" width="28" height="20" viewBox="0 0 28 20"><path d="M4 10 L11 4 L18 10 L11 17 Z" fill="#fafafa" stroke="#222" stroke-width="1.5" stroke-linejoin="round"/><path d="M11 17 L18 10 L19.5 16" stroke="#222" stroke-width="1.3" fill="#444"/><path d="M9 4.5 Q12 0.5 15 4 V9" stroke="#333" stroke-width="1" fill="none"/><path d="M15 9 V11" stroke="#777" stroke-width="1.5"/><path d="M22 18 H25 V15 Z" fill="#111"/></svg>
<svg style="position:absolute;left:1243px;top:405px;filter:grayscale(1)" width="28" height="20" viewBox="0 0 28 20"><path d="M7 18 L12.5 11 Q10 8 12 5.5 Q15 2.5 18.5 3.5 Q21.5 6 19.5 10 Q17.5 13.5 14 13.5 L9.5 19.5 Z" fill="#f4f4f4" stroke="#333" stroke-width="1.2" stroke-linejoin="round"/><path d="M13 6.5 L17 10.5 M14.5 5 L18.5 9" stroke="#888" stroke-width="0.9"/><path d="M8 13 L11 10" stroke="#999" stroke-width="0.8"/><path d="M22 18 H25 V15 Z" fill="#111"/></svg>
<svg style="position:absolute;left:1243px;top:427px;filter:grayscale(1)" width="28" height="20" viewBox="0 0 28 20"><defs><radialGradient id="dg" cx="0.35" cy="0.3" r="0.8"><stop offset="0" stop-color="#999"/><stop offset="0.5" stop-color="#222"/><stop offset="1" stop-color="#000"/></radialGradient></defs><ellipse cx="10.5" cy="7.5" rx="4.8" ry="4.2" fill="url(#dg)"/><path d="M13.5 10.5 L20 16.5" stroke="#222" stroke-width="1.4"/><path d="M22 18 H25 V15 Z" fill="#111"/></svg>
<div style="position:absolute;left:1243px;top:452px;width:28px;height:1px;background:#a8a8a8"></div>
<svg style="position:absolute;left:1243px;top:455px;filter:grayscale(1)" width="28" height="20" viewBox="0 0 28 20"><path d="M14 1 L10 9.5 L11.5 13 H16.5 L18 9.5 Z" fill="#fff" stroke="#111" stroke-width="1.3" stroke-linejoin="round"/><path d="M14 4 V9.5" stroke="#111" stroke-width="1"/><circle cx="14" cy="10" r="0.9" fill="#111"/><path d="M11 14 H17 M11.5 14 V18 M16.5 14 V18 M14 14 V18" stroke="#222" stroke-width="1.4"/><path d="M22 18 H25 V15 Z" fill="#111"/></svg>
<svg style="position:absolute;left:1243px;top:477px;filter:grayscale(1)" width="28" height="20" viewBox="0 0 28 20"><path d="M6.5 4 H20.5 L20.8 7.5 H20 Q19.5 5.5 18 5.5 H15 V16.5 Q15 17.5 16.8 17.5 V18.3 H10.2 V17.5 Q12 17.5 12 16.5 V5.5 H9 Q7.5 5.5 7 7.5 H6.2 Z" fill="#111"/><path d="M22 18 H25 V15 Z" fill="#111"/></svg>
<svg style="position:absolute;left:1243px;top:499px;filter:grayscale(1)" width="28" height="20" viewBox="0 0 28 20"><path d="M11 4 L11 12 L16 8 Z" fill="#222"/></svg>
<div style="position:absolute;left:722px;top:505px;width:548px;height:371px;background:#8c8ca8;border:1px solid #6a6a8a;border-radius:7px 7px 0 0"></div>
<div style="position:absolute;left:723px;top:506px;width:546px;height:369px;border:1px solid #f4f4f8;border-radius:6px 6px 0 0"></div>
<div style="position:absolute;left:723px;top:506px;width:546px;height:28px;border-radius:6px 6px 0 0;background:linear-gradient(to bottom,#f8f8fc 0,#f8f8fc 1px,#b0b0cc 2px,#a9a9c6 4px,#bcbfce 11px,#d8dae2 18px,#f4f4f6 24px,#fbfbfb 26px,#d0d0dc 27px,#7a7a98 28px)"></div>
<div style="position:absolute;left:725px;top:534px;width:542px;height:339px;background:#ececec"></div>
<div style="position:absolute;left:728.6px;top:514.36px;font-size:14px;line-height:14px;color:#000;font-weight:700;white-space:nowrap;transform:scaleX(0.918);transform-origin:0 0;text-shadow:1px 1px 0 rgba(120,120,150,0.3)">Color Picker (Foreground Color)</div>
<div style="position:absolute;left:1244px;top:510px;width:21px;height:21px;border:1px solid #b04040;border-radius:3px;background:linear-gradient(135deg,#f08c7c,#e05a4c 45%,#c83c30)"></div>
<svg style="position:absolute;left:1244px;top:510px" width="21" height="21"><path d="M5.5 5.5 L15.5 15.5 M15.5 5.5 L5.5 15.5" stroke="#fff" stroke-width="2.2"/></svg>
<div style="position:absolute;left:735px;top:564px;width:259px;height:259px;background:#fff;border-top:2px solid #a0a0a0;border-left:2px solid #a0a0a0"></div>
<div style="position:absolute;left:737px;top:566px;width:256px;height:256px;background:linear-gradient(to top,#000,rgba(0,0,0,0)),linear-gradient(to right,#fff,#f00)"></div>
<svg style="position:absolute;left:737px;top:686px" width="10" height="16"><circle cx="2" cy="8" r="5" fill="none" stroke="#fff" stroke-width="1.3"/></svg>
<div style="position:absolute;left:1005px;top:564px;width:23px;height:259px;background:#fff;border-top:1px solid #a0a0a0;border-left:2px solid #a8a8a8"></div>
<div style="position:absolute;left:1007px;top:566px;width:19px;height:256px;background:linear-gradient(to bottom,#f00 0%,#f0f 16.7%,#00f 33.3%,#0ff 50%,#0f0 66.7%,#ff0 83.3%,#f00 100%)"></div>
<svg style="position:absolute;left:995px;top:815px" width="42" height="13"><path d="M1.5 2.5 Q1.5 2 2 2 H4.5 L8.5 6.5 L4.5 10.5 H2 Q1.5 10.5 1.5 10 Z" fill="#fff" stroke="#555" stroke-width="1"/><path d="M40.5 2.5 Q40.5 2 40 2 H37.5 L33.5 6.5 L37.5 10.5 H40 Q40.5 10.5 40.5 10 Z" fill="#fff" stroke="#555" stroke-width="1"/></svg>
<div style="position:absolute;left:1059.3px;top:552.43px;font-size:10px;line-height:10px;color:#000;font-weight:400;white-space:nowrap;transform:scaleX(1.0);transform-origin:0 0;">new</div>
<div style="position:absolute;left:1040px;top:568px;width:61px;height:70px;background:#808080;border:2px solid #000;box-shadow:1px 1px 0 #fff"></div>
<div style="position:absolute;left:1052.7px;top:639.83px;font-size:10px;line-height:10px;color:#000;font-weight:400;white-space:nowrap;transform:scaleX(1.04);transform-origin:0 0;">current</div>
<svg style="position:absolute;left:1108px;top:606px" width="15" height="30"><path d="M2.5 5 L7.5 2.5 L12.5 5 V10.5 L7.5 13 L2.5 10.5 Z" fill="#aaa" stroke="#777" stroke-width="0.8"/><path d="M2.5 5 L7.5 7.5 L12.5 5 M7.5 7.5 V13" stroke="#777" stroke-width="0.8" fill="none"/><path d="M7.5 7.5 L12.5 5 V10.5 L7.5 13 Z" fill="#eee"/><path d="M2.5 5 L7.5 2.5 L12.5 5 L7.5 7.5 Z" fill="#d8d8d8"/></svg>
<div style="position:absolute;left:1109px;top:622px;width:14px;height:13px;background:#999;border:2px solid #000;box-shadow:1px 1px 0 #fff"></div>
<div style="position:absolute;left:1139px;top:545px;width:117px;height:18px;border:1px solid #1f4f7d;border-radius:3px;background:linear-gradient(to bottom,#ffffff,#f4f4f8 30%,#dcdce6 75%,#c4c4d4);box-shadow:inset 0 1px 0 #cfe0f8,inset 0 -2px 0 #6894e0,inset 1px 0 0 #b8d0f4,inset -1px 0 0 #b8d0f4;"></div>
<div style="position:absolute;left:1139px;top:548.59px;width:117px;text-align:center;font-size:12px;line-height:12px;white-space:nowrap;color:#000"><span style="display:inline-block;transform:scaleX(1.0)">OK</span></div>
<div style="position:absolute;left:1139px;top:573px;width:117px;height:18px;border:1px solid #1f4f7d;border-radius:3px;background:linear-gradient(to bottom,#ffffff,#f4f4f8 30%,#dcdce6 75%,#c4c4d4);"></div>
<div style="position:absolute;left:1139px;top:576.59px;width:117px;text-align:center;font-size:12px;line-height:12px;white-space:nowrap;color:#000"><span style="display:inline-block;transform:scaleX(1.0)">Cancel</span></div>
<div style="position:absolute;left:1139px;top:608px;width:117px;height:18px;border:1px solid #1f4f7d;border-radius:3px;background:linear-gradient(to bottom,#ffffff,#f4f4f8 30%,#dcdce6 75%,#c4c4d4);"></div>
<div style="position:absolute;left:1139px;top:611.59px;width:117px;text-align:center;font-size:12px;line-height:12px;white-space:nowrap;color:#000"><span style="display:inline-block;transform:scaleX(1.055)">Add To Swatches</span></div>
<div style="position:absolute;left:1139px;top:643px;width:117px;height:18px;border:1px solid #1f4f7d;border-radius:3px;background:linear-gradient(to bottom,#ffffff,#f4f4f8 30%,#dcdce6 75%,#c4c4d4);"></div>
<div style="position:absolute;left:1139px;top:646.59px;width:117px;text-align:center;font-size:12px;line-height:12px;white-space:nowrap;color:#000"><span style="display:inline-block;transform:scaleX(0.945)">Color Libraries</span></div>
<svg style="position:absolute;left:1038.5px;top:680.5px" width="14" height="14"><defs><linearGradient id="rg" x1="0" y1="0" x2="1" y2="1"><stop offset="0" stop-color="#dcdcd4"/><stop offset="1" stop-color="#fff"/></linearGradient></defs><circle cx="7" cy="7" r="5.8" fill="url(#rg)" stroke="#2c5c94" stroke-width="1"/><path d="M7 4 L10 7 L7 10 L4 7 Z" fill="#3aa83a"/></svg>
<div style="position:absolute;left:1054.5px;top:682.59px;font-size:12px;line-height:12px;color:#000;font-weight:400;white-space:nowrap;">H:</div>
<div style="position:absolute;left:1074px;top:677px;width:34px;height:22px;border:1px solid #a9b0b8;background:#fff"></div>
<div style="position:absolute;left:1080.5px;top:682.09px;font-size:12px;line-height:12px;color:#000;font-weight:400;white-space:nowrap;transform:scaleX(1.0);transform-origin:0 0;">0</div>
<div style="position:absolute;left:1111px;top:680.59px;font-size:12px;line-height:12px;color:#000;font-weight:400;white-space:nowrap;">°</div>
<svg style="position:absolute;left:1038.5px;top:706.5px" width="14" height="14"><defs><linearGradient id="rg" x1="0" y1="0" x2="1" y2="1"><stop offset="0" stop-color="#dcdcd4"/><stop offset="1" stop-color="#fff"/></linearGradient></defs><circle cx="7" cy="7" r="5.8" fill="url(#rg)" stroke="#2c5c94" stroke-width="1"/></svg>
<div style="position:absolute;left:1054.5px;top:708.59px;font-size:12px;line-height:12px;color:#000;font-weight:400;white-space:nowrap;">S:</div>
<div style="position:absolute;left:1073px;top:703px;width:33px;height:22px;border:1px solid #a9b0b8;background:#fff"></div>
<div style="position:absolute;left:1079.5px;top:708.09px;font-size:12px;line-height:12px;color:#000;font-weight:400;white-space:nowrap;transform:scaleX(1.0);transform-origin:0 0;">0</div>
<div style="position:absolute;left:1109px;top:708.59px;font-size:12px;line-height:12px;color:#000;font-weight:400;white-space:nowrap;">%</div>
<svg style="position:absolute;left:1038.5px;top:732.5px" width="14" height="14"><defs><linearGradient id="rg" x1="0" y1="0" x2="1" y2="1"><stop offset="0" stop-color="#dcdcd4"/><stop offset="1" stop-color="#fff"/></linearGradient></defs><circle cx="7" cy="7" r="5.8" fill="url(#rg)" stroke="#2c5c94" stroke-width="1"/></svg>
<div style="position:absolute;left:1054.5px;top:734.59px;font-size:12px;line-height:12px;color:#000;font-weight:400;white-space:nowrap;">B:</div>
<div style="position:absolute;left:1073px;top:729px;width:33px;height:22px;border:1px solid #a9b0b8;background:#fff"></div>
<div style="position:absolute;left:1079.5px;top:734.09px;font-size:12px;line-height:12px;color:#000;font-weight:400;white-space:nowrap;transform:scaleX(1.0);transform-origin:0 0;">50</div>
<div style="position:absolute;left:1109px;top:734.59px;font-size:12px;line-height:12px;color:#000;font-weight:400;white-space:nowrap;">%</div>
<svg style="position:absolute;left:1038.5px;top:762.5px" width="14" height="14"><defs><linearGradient id="rg" x1="0" y1="0" x2="1" y2="1"><stop offset="0" stop-color="#dcdcd4"/><stop offset="1" stop-color="#fff"/></linearGradient></defs><circle cx="7" cy="7" r="5.8" fill="url(#rg)" stroke="#2c5c94" stroke-width="1"/></svg>
<div style="position:absolute;left:1054.5px;top:764.59px;font-size:12px;line-height:12px;color:#000;font-weight:400;white-space:nowrap;">R:</div>
<div style="position:absolute;left:1073px;top:759px;width:33px;height:22px;border:1px solid #a9b0b8;background:#fff"></div>
<div style="position:absolute;left:1079px;top:762px;width:21px;height:14px;background:#b8b8c4"></div>
<div style="position:absolute;left:1079.5px;top:764.09px;font-size:12px;line-height:12px;color:#000;font-weight:400;white-space:nowrap;transform:scaleX(1.0);transform-origin:0 0;">128</div>
<svg style="position:absolute;left:1038.5px;top:788.5px" width="14" height="14"><defs><linearGradient id="rg" x1="0" y1="0" x2="1" y2="1"><stop offset="0" stop-color="#dcdcd4"/><stop offset="1" stop-color="#fff"/></linearGradient></defs><circle cx="7" cy="7" r="5.8" fill="url(#rg)" stroke="#2c5c94" stroke-width="1"/></svg>
<div style="position:absolute;left:1054.5px;top:790.59px;font-size:12px;line-height:12px;color:#000;font-weight:400;white-space:nowrap;">G:</div>
<div style="position:absolute;left:1074px;top:785px;width:34px;height:22px;border:1px solid #a9b0b8;background:#fff"></div>
<div style="position:absolute;left:1080.5px;top:790.09px;font-size:12px;line-height:12px;color:#000;font-weight:400;white-space:nowrap;transform:scaleX(1.0);transform-origin:0 0;">128</div>
<svg style="position:absolute;left:1038.5px;top:814.5px" width="14" height="14"><defs><linearGradient id="rg" x1="0" y1="0" x2="1" y2="1"><stop offset="0" stop-color="#dcdcd4"/><stop offset="1" stop-color="#fff"/></linearGradient></defs><circle cx="7" cy="7" r="5.8" fill="url(#rg)" stroke="#2c5c94" stroke-width="1"/></svg>
<div style="position:absolute;left:1054.5px;top:816.59px;font-size:12px;line-height:12px;color:#000;font-weight:400;white-space:nowrap;">B:</div>
<div style="position:absolute;left:1073px;top:811px;width:33px;height:22px;border:1px solid #a9b0b8;background:#fff"></div>
<div style="position:absolute;left:1079.5px;top:816.09px;font-size:12px;line-height:12px;color:#000;font-weight:400;white-space:nowrap;transform:scaleX(1.0);transform-origin:0 0;">128</div>
<svg style="position:absolute;left:1151px;top:680.5px" width="14" height="14"><defs><linearGradient id="rg" x1="0" y1="0" x2="1" y2="1"><stop offset="0" stop-color="#dcdcd4"/><stop offset="1" stop-color="#fff"/></linearGradient></defs><circle cx="7" cy="7" r="5.8" fill="url(#rg)" stroke="#2c5c94" stroke-width="1"/></svg>
<div style="position:absolute;left:1167px;top:682.59px;font-size:12px;line-height:12px;color:#000;font-weight:400;white-space:nowrap;">L:</div>
<div style="position:absolute;left:1186px;top:677px;width:40px;height:22px;border:1px solid #a9b0b8;background:#fff"></div>
<div style="position:absolute;left:1192.5px;top:682.09px;font-size:12px;line-height:12px;color:#000;font-weight:400;white-space:nowrap;transform:scaleX(1.0);transform-origin:0 0;">54</div>
<svg style="position:absolute;left:1151px;top:706.5px" width="14" height="14"><defs><linearGradient id="rg" x1="0" y1="0" x2="1" y2="1"><stop offset="0" stop-color="#dcdcd4"/><stop offset="1" stop-color="#fff"/></linearGradient></defs><circle cx="7" cy="7" r="5.8" fill="url(#rg)" stroke="#2c5c94" stroke-width="1"/></svg>
<div style="position:absolute;left:1167px;top:708.59px;font-size:12px;line-height:12px;color:#000;font-weight:400;white-space:nowrap;">a:</div>
<div style="position:absolute;left:1186px;top:703px;width:40px;height:22px;border:1px solid #a9b0b8;background:#fff"></div>
<div style="position:absolute;left:1192.5px;top:708.09px;font-size:12px;line-height:12px;color:#000;font-weight:400;white-space:nowrap;transform:scaleX(1.0);transform-origin:0 0;">0</div>
<svg style="position:absolute;left:1151px;top:732.5px" width="14" height="14"><defs><linearGradient id="rg" x1="0" y1="0" x2="1" y2="1"><stop offset="0" stop-color="#dcdcd4"/><stop offset="1" stop-color="#fff"/></linearGradient></defs><circle cx="7" cy="7" r="5.8" fill="url(#rg)" stroke="#2c5c94" stroke-width="1"/></svg>
<div style="position:absolute;left:1167px;top:734.59px;font-size:12px;line-height:12px;color:#000;font-weight:400;white-space:nowrap;">b:</div>
<div style="position:absolute;left:1186px;top:729px;width:40px;height:22px;border:1px solid #a9b0b8;background:#fff"></div>
<div style="position:absolute;left:1192.5px;top:734.09px;font-size:12px;line-height:12px;color:#000;font-weight:400;white-space:nowrap;transform:scaleX(1.0);transform-origin:0 0;">0</div>
<div style="position:absolute;left:1140px;top:764.59px;width:42px;text-align:right;font-size:12px;line-height:12px;white-space:nowrap">C:</div>
<div style="position:absolute;left:1186px;top:759px;width:33px;height:22px;border:1px solid #a9b0b8;background:#fff"></div>
<div style="position:absolute;left:1192.5px;top:764.09px;font-size:12px;line-height:12px;color:#000;font-weight:400;white-space:nowrap;transform:scaleX(1.0);transform-origin:0 0;">52</div>
<div style="position:absolute;left:1223px;top:764.59px;font-size:12px;line-height:12px;color:#000;font-weight:400;white-space:nowrap;">%</div>
<div style="position:absolute;left:1140px;top:790.59px;width:42px;text-align:right;font-size:12px;line-height:12px;white-space:nowrap">M:</div>
<div style="position:absolute;left:1186px;top:785px;width:33px;height:22px;border:1px solid #a9b0b8;background:#fff"></div>
<div style="position:absolute;left:1192.5px;top:790.09px;font-size:12px;line-height:12px;color:#000;font-weight:400;white-space:nowrap;transform:scaleX(1.0);transform-origin:0 0;">43</div>
<div style="position:absolute;left:1223px;top:790.59px;font-size:12px;line-height:12px;color:#000;font-weight:400;white-space:nowrap;">%</div>
<div style="position:absolute;left:1140px;top:816.59px;width:42px;text-align:right;font-size:12px;line-height:12px;white-space:nowrap">Y:</div>
<div style="position:absolute;left:1186px;top:811px;width:33px;height:22px;border:1px solid #a9b0b8;background:#fff"></div>
<div style="position:absolute;left:1192.5px;top:816.09px;font-size:12px;line-height:12px;color:#000;font-weight:400;white-space:nowrap;transform:scaleX(1.0);transform-origin:0 0;">43</div>
<div style="position:absolute;left:1223px;top:816.59px;font-size:12px;line-height:12px;color:#000;font-weight:400;white-space:nowrap;">%</div>
<div style="position:absolute;left:1140px;top:842.59px;width:42px;text-align:right;font-size:12px;line-height:12px;white-space:nowrap">K:</div>
<div style="position:absolute;left:1186px;top:837px;width:33px;height:22px;border:1px solid #a9b0b8;background:#fff"></div>
<div style="position:absolute;left:1192.5px;top:842.09px;font-size:12px;line-height:12px;color:#000;font-weight:400;white-space:nowrap;transform:scaleX(1.0);transform-origin:0 0;">8</div>
<div style="position:absolute;left:1223px;top:842.59px;font-size:12px;line-height:12px;color:#000;font-weight:400;white-space:nowrap;">%</div>
<div style="position:absolute;left:1040px;top:846.59px;font-size:12px;line-height:12px;color:#000;font-weight:400;white-space:nowrap;">#</div>
<div style="position:absolute;left:1052px;top:841px;width:56px;height:22px;border:1px solid #a9b0b8;background:#fff"></div>
<div style="position:absolute;left:1058.5px;top:846.09px;font-size:12px;line-height:12px;color:#000;font-weight:400;white-space:nowrap;transform:scaleX(1.0);transform-origin:0 0;">808080</div>
<div style="position:absolute;left:735px;top:831px;width:13px;height:13px;border:1px solid #1c5180;background:linear-gradient(135deg,#dcdcd6,#fcfcfc)"></div>
<div style="position:absolute;left:751px;top:832.89px;font-size:12px;line-height:12px;color:#000;font-weight:400;white-space:nowrap;transform:scaleX(0.99);transform-origin:0 0;">Only Web Colors</div>
<div style="position:absolute;left:1270px;top:666px;width:2px;height:22px;background:#fff;border:1px solid #e0e0e0;border-left:none"></div>
</div></body></html>
